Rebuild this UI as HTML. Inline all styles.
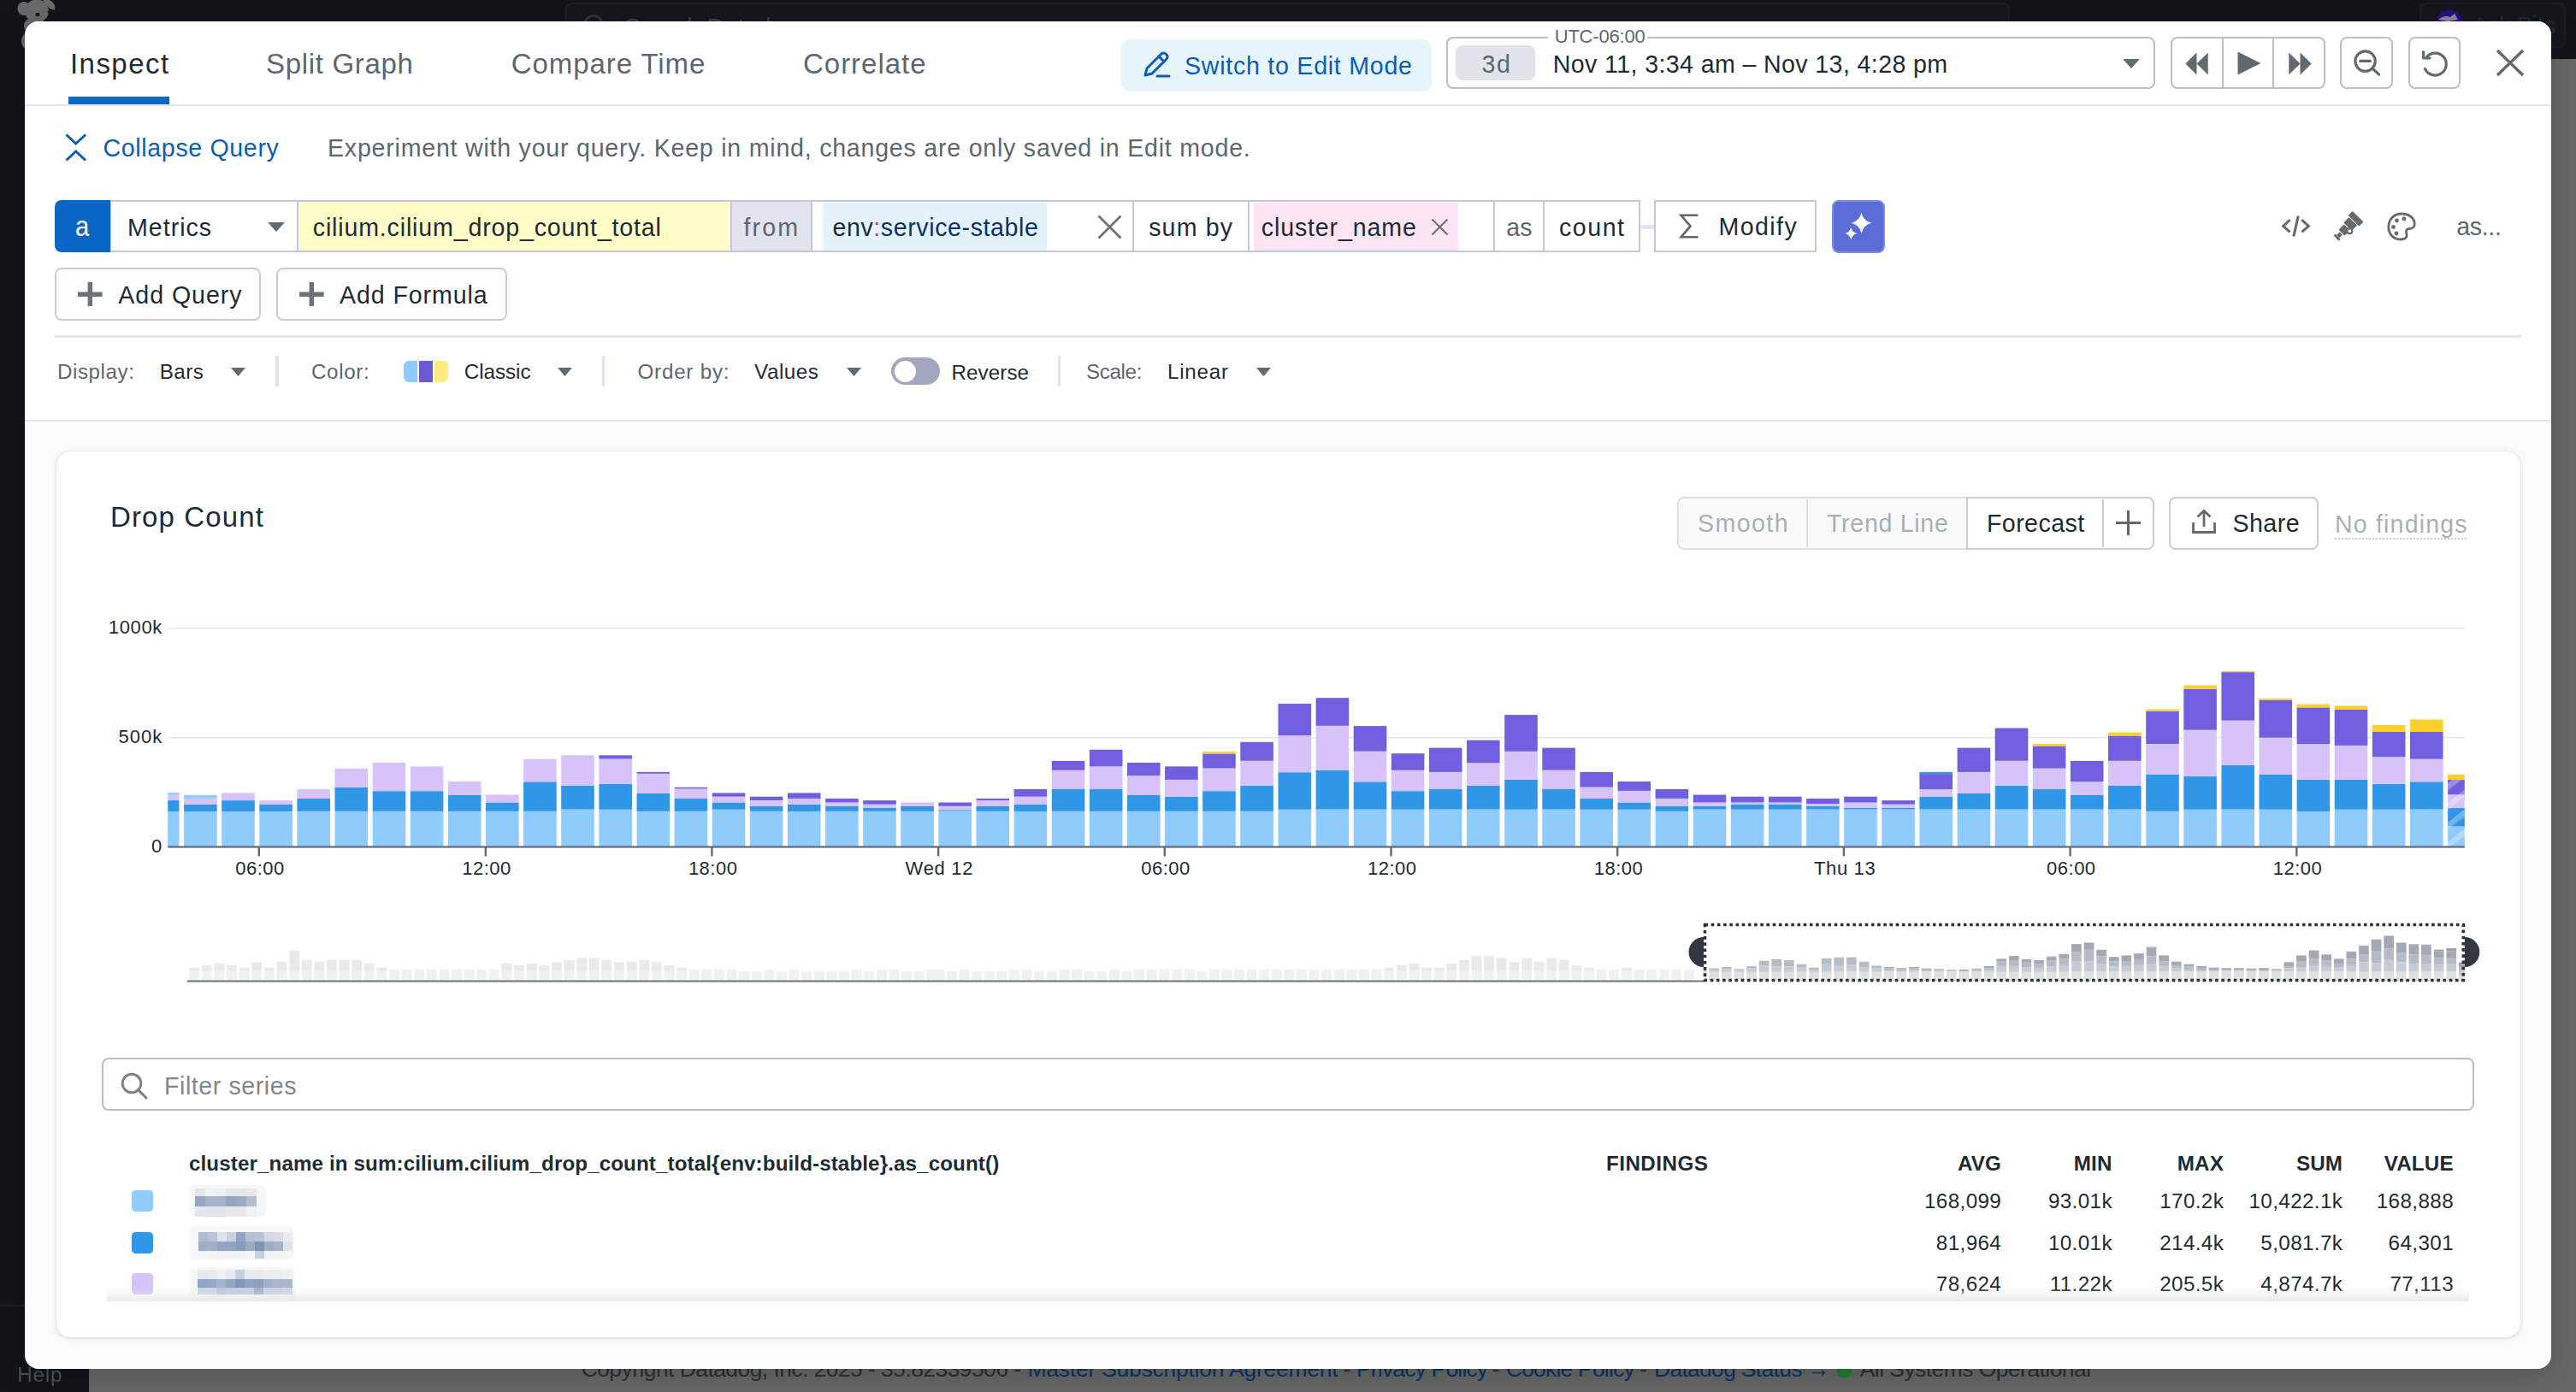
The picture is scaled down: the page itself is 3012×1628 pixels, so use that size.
<!DOCTYPE html>
<html lang="en"><head><meta charset="utf-8"><title>Drop Count - Inspect</title>
<style>
html,body{margin:0;padding:0;}
body{width:3012px;height:1628px;overflow:hidden;position:relative;background:#676868;font-family:"Liberation Sans", sans-serif;}
.a{position:absolute;box-sizing:border-box;}
.t{white-space:nowrap;}
</style></head>
<body>
<div class="a" style="left:0.0px;top:0.0px;width:3012.0px;height:68.5px;background:#111418;"></div>
<div class="a" style="left:0.0px;top:0.0px;width:104.0px;height:1628.0px;background:#111418;"></div>
<div class="a" style="left:661.0px;top:3.0px;width:1689.0px;height:60.0px;background:#15171c;border:2px solid #1c1f25;border-radius:8px;"></div>
<svg class="a" style="left:680.0px;top:14.0px;" width="30" height="30" viewBox="0 0 30 30"><circle cx="14" cy="15" r="10.5" fill="none" stroke="#33373e" stroke-width="2.6"/></svg>
<div class="a t" style="top:17.8px;font-size:28.6px;line-height:28.6px;color:#3d4148;letter-spacing:-0.297px;left:730.0px;">Search Datadog</div>
<div class="a" style="left:2829.0px;top:3.0px;width:171.0px;height:53.0px;background:#14171b;border:2px solid #1b1f24;border-radius:8px;"></div>
<svg class="a" style="left:2848.0px;top:11.0px;" width="32" height="32" viewBox="0 0 32 32"><circle cx="16" cy="16" r="15.5" fill="#2d0b80"/><path d="M3 12 Q10 6 17 9 L22 5 L26 12 L14 14 Z" fill="#8d8a99"/></svg>
<div class="a t" style="top:15.8px;font-size:28.6px;line-height:28.6px;color:#252930;letter-spacing:-0.723px;left:2890.0px;">Ask Bits</div>
<svg class="a" style="left:14.0px;top:0.0px;" width="60" height="64" viewBox="0 0 60 64"><g fill="#676a6a"><ellipse cx="14" cy="10" rx="7.5" ry="8"/><ellipse cx="29" cy="13" rx="14" ry="13.5"/><path d="M36 0 L44 0 Q52 4 50 12 L44 10 Z"/><ellipse cx="26" cy="30" rx="12" ry="10"/><ellipse cx="17" cy="48" rx="6" ry="9"/></g><ellipse cx="30" cy="17" rx="2.6" ry="2.2" fill="#15181b"/><ellipse cx="43.5" cy="14" rx="2" ry="1.8" fill="#15181b"/></svg>
<div class="a" style="left:0.0px;top:1525.6px;width:104.0px;height:2.0px;background:#1d2125;"></div>
<div class="a t" style="top:1595.5px;font-size:24.2px;line-height:24.2px;color:#4b5157;letter-spacing:0.813px;left:20.2px;">Help</div>
<div class="a t" style="top:1588.4px;font-size:26.4px;line-height:26.4px;color:#2b3035;letter-spacing:-0.527px;left:679.7px;">Copyright Datadog, Inc. 2025 - 35.82339506 -</div>
<div class="a t" style="top:1588.4px;font-size:26.4px;line-height:26.4px;color:#0d3466;letter-spacing:-0.175px;left:1201.4px;">Master Subscription Agreement</div>
<div class="a t" style="top:1588.4px;font-size:26.4px;line-height:26.4px;color:#2b3035;left:1570.5px;">-</div>
<div class="a t" style="top:1588.4px;font-size:26.4px;line-height:26.4px;color:#0d3466;letter-spacing:-0.783px;left:1586.0px;">Privacy Policy</div>
<div class="a t" style="top:1588.4px;font-size:26.4px;line-height:26.4px;color:#2b3035;left:1744.5px;">-</div>
<div class="a t" style="top:1588.4px;font-size:26.4px;line-height:26.4px;color:#0d3466;letter-spacing:-0.761px;left:1760.9px;">Cookie Policy</div>
<div class="a t" style="top:1588.4px;font-size:26.4px;line-height:26.4px;color:#2b3035;left:1917.0px;">-</div>
<div class="a t" style="top:1588.4px;font-size:26.4px;line-height:26.4px;color:#0d3466;letter-spacing:-0.660px;left:1934.0px;">Datadog Status →</div>
<div class="a" style="left:2146.5px;top:1593.0px;width:19.0px;height:19.0px;background:#2a7a2e;border-radius:9.5px;"></div>
<div class="a t" style="top:1588.4px;font-size:26.4px;line-height:26.4px;color:#2b3035;letter-spacing:-0.514px;left:2174.7px;">All Systems Operational</div>
<div class="a" style="left:29.0px;top:25.0px;width:2954.0px;height:1576.0px;background:#f9fafa;border-radius:16px;box-shadow:0 8px 36px rgba(0,0,0,.2);"></div>
<div class="a" style="left:29.0px;top:25.0px;width:2954.0px;height:468.0px;background:#ffffff;border-radius:16px 16px 0 0;border-bottom:2px solid #e3e5e8;"></div>
<div class="a" style="left:29.0px;top:122.2px;width:2954.0px;height:2.0px;background:#e3e5e8;"></div>
<div class="a t" style="top:57.5px;font-size:33px;line-height:33px;color:#1c2b34;letter-spacing:1.442px;left:82.0px;">Inspect</div>
<div class="a t" style="top:57.5px;font-size:33px;line-height:33px;color:#5c6670;letter-spacing:0.674px;left:311.0px;">Split Graph</div>
<div class="a t" style="top:57.5px;font-size:33px;line-height:33px;color:#5c6670;letter-spacing:0.924px;left:597.8px;">Compare Time</div>
<div class="a t" style="top:57.5px;font-size:33px;line-height:33px;color:#5c6670;letter-spacing:0.974px;left:939.0px;">Correlate</div>
<div class="a" style="left:80.0px;top:113.0px;width:118.0px;height:8.8px;background:#0969c3;"></div>
<div class="a" style="left:1311.0px;top:46.3px;width:362.5px;height:60.3px;background:#e6f4fb;border-radius:10px;"></div>
<svg class="a" style="left:1336.0px;top:58.0px;" width="36" height="36" viewBox="0 0 36 36"><g fill="none" stroke="#0b5cb5" stroke-width="3" stroke-linejoin="round" stroke-linecap="round"><path d="M3 30 L5 22 L22 5 a3.5 3.5 0 0 1 5 0 l1 1 a3.5 3.5 0 0 1 0 5 L11 28 Z"/><path d="M19 8 l6 6"/><path d="M17 31 H31"/></g></svg>
<div class="a t" style="top:63.4px;font-size:28.6px;line-height:28.6px;color:#0b5cb5;letter-spacing:0.737px;left:1385.0px;">Switch to Edit Mode</div>
<div class="a" style="left:1691.0px;top:42.6px;width:829.3px;height:61.4px;background:#fff;border:2px solid #b9bdd0;border-radius:8px;"></div>
<div class="a" style="left:1810.0px;top:40.0px;width:116.0px;height:8.0px;background:#fff;"></div>
<div class="a t" style="top:31.6px;font-size:22px;line-height:22px;color:#5c6670;letter-spacing:-0.200px;left:1817.7px;">UTC-06:00</div>
<div class="a" style="left:1702.0px;top:52.8px;width:93.0px;height:41.6px;background:#e1e3ea;border-radius:8px;"></div>
<div class="a t" style="top:61.0px;font-size:28.6px;line-height:28.6px;color:#5c6670;letter-spacing:1.644px;left:1732.4px;">3d</div>
<div class="a t" style="top:61.0px;font-size:28.6px;line-height:28.6px;color:#1c2b34;letter-spacing:0.376px;left:1815.8px;">Nov 11, 3:34 am – Nov 13, 4:28 pm</div>
<svg class="a" style="left:2482.4px;top:69.1px;" width="20" height="11" viewBox="0 0 20 11"><path d="M0 0H20L10.0 11Z" fill="#5f6b73"/></svg>
<div class="a" style="left:2538.0px;top:42.6px;width:180.5px;height:61.4px;background:#fff;border:2px solid #b9bdd0;border-radius:8px;"></div>
<div class="a" style="left:2598.0px;top:44.5px;width:2.0px;height:58.0px;background:#b9bdd0;"></div>
<div class="a" style="left:2656.5px;top:44.5px;width:2.0px;height:58.0px;background:#b9bdd0;"></div>
<svg class="a" style="left:2555.0px;top:60.5px;" width="28" height="27" viewBox="0 0 28 27"><path d="M13.5 0.5V26.5L0.3 13.5Z M26.7 0.5V26.5L13.5 13.5Z" fill="#626a71"/></svg>
<svg class="a" style="left:2616.0px;top:60.0px;" width="28" height="28" viewBox="0 0 28 28"><path d="M0.5 0.5V27.5L27.5 14Z" fill="#626a71"/></svg>
<svg class="a" style="left:2675.5px;top:60.5px;" width="28" height="27" viewBox="0 0 28 27"><path d="M0.3 0.5V26.5L13.5 13.5Z M13.5 0.5V26.5L26.7 13.5Z" fill="#626a71"/></svg>
<div class="a" style="left:2736.4px;top:42.6px;width:61.2px;height:61.4px;background:#fff;border:2px solid #b9bdd0;border-radius:8px;"></div>
<svg class="a" style="left:2750.0px;top:56.0px;" width="36" height="36" viewBox="0 0 36 36"><g fill="none" stroke="#626a71" stroke-width="3.2" stroke-linecap="round"><circle cx="15.6" cy="15.6" r="11.7"/><path d="M24 24 L31.6 31.2"/><path d="M9.8 15.4 H21.4"/></g></svg>
<div class="a" style="left:2816.3px;top:42.6px;width:60.6px;height:61.4px;background:#fff;border:2px solid #b9bdd0;border-radius:8px;"></div>
<svg class="a" style="left:2828.0px;top:56.0px;" width="38" height="38" viewBox="0 0 38 38"><g fill="none" stroke="#626a71" stroke-width="3.2" stroke-linecap="round" stroke-linejoin="round"><path d="M9.5 10.5 A13 13 0 1 1 7.5 24.5"/><path d="M5.5 4.5 V12 H13"/></g></svg>
<svg class="a" style="left:2918.0px;top:57.0px;" width="34" height="34" viewBox="0 0 34 34"><path d="M2 2L32 31M32 2L2 31" stroke="#626a71" stroke-width="3.4" fill="none"/></svg>
<svg class="a" style="left:75.0px;top:154.0px;" width="28" height="36" viewBox="0 0 28 36"><path d="M2.5 3.5L13.7 14L25 3.5M2.5 33.5L13.7 23L25 33.5" fill="none" stroke="#0b5cb5" stroke-width="3"/></svg>
<div class="a t" style="top:159.2px;font-size:28.6px;line-height:28.6px;color:#0b5cb5;letter-spacing:0.637px;left:120.5px;">Collapse Query</div>
<div class="a t" style="top:159.2px;font-size:28.6px;line-height:28.6px;color:#5c6670;letter-spacing:0.765px;left:383.0px;">Experiment with your query. Keep in mind, changes are only saved in Edit mode.</div>
<div class="a" style="left:128.3px;top:234.2px;width:220.7px;height:61.2px;background:#fff;border:2px solid #c3c6dc;"></div>
<div class="a" style="left:347.0px;top:234.2px;width:509.0px;height:61.2px;background:#fffcc8;border:2px solid #c3c6dc;"></div>
<div class="a" style="left:854.0px;top:234.2px;width:96.0px;height:61.2px;background:#e1e3ee;border:2px solid #c3c6dc;"></div>
<div class="a" style="left:948.0px;top:234.2px;width:378.0px;height:61.2px;background:#fff;border:2px solid #c3c6dc;"></div>
<div class="a" style="left:1324.0px;top:234.2px;width:137.0px;height:61.2px;background:#fff;border:2px solid #c3c6dc;"></div>
<div class="a" style="left:1459.0px;top:234.2px;width:289.0px;height:61.2px;background:#fff;border:2px solid #c3c6dc;"></div>
<div class="a" style="left:1746.0px;top:234.2px;width:59.7px;height:61.2px;background:#fff;border:2px solid #c3c6dc;"></div>
<div class="a" style="left:1803.7px;top:234.2px;width:114.6px;height:61.2px;background:#fff;border:2px solid #c3c6dc;"></div>
<div class="a" style="left:64.0px;top:234.2px;width:64.5px;height:61.2px;background:#0b66c6;border-radius:8px 0 0 8px;"></div>
<div class="a t" style="top:249.0px;font-size:32.5px;line-height:32.5px;color:#fff;left:88.3px;transform:scaleX(.9);transform-origin:left;">a</div>
<div class="a t" style="top:251.8px;font-size:28.6px;line-height:28.6px;color:#1c2b34;letter-spacing:1.023px;left:148.9px;">Metrics</div>
<svg class="a" style="left:313.3px;top:260.1px;" width="20" height="11" viewBox="0 0 20 11"><path d="M0 0H20L10.0 11Z" fill="#5f6b73"/></svg>
<div class="a t" style="top:251.8px;font-size:28.6px;line-height:28.6px;color:#1c2b34;letter-spacing:0.829px;left:365.8px;">cilium.cilium_drop_count_total</div>
<div class="a t" style="top:251.8px;font-size:28.6px;line-height:28.6px;color:#5c6670;letter-spacing:2.078px;left:869.6px;">from</div>
<div class="a" style="left:962.0px;top:237.0px;width:262.2px;height:55.5px;background:#e4f3fb;"></div>
<div class="a t" style="top:251.8px;font-size:28.6px;line-height:28.6px;color:#0b3070;letter-spacing:0.591px;left:973.4px;"><span style="color:#1c2b34">env</span><span style="color:#c42fb0">:</span>service-stable</div>
<svg class="a" style="left:1283.0px;top:250.5px;" width="29" height="29" viewBox="0 0 29 29"><path d="M1.5 1.5L27.5 27.5M27.5 1.5L1.5 27.5" stroke="#6b7278" stroke-width="2.8" fill="none"/></svg>
<div class="a t" style="top:251.8px;font-size:28.6px;line-height:28.6px;color:#1c2b34;letter-spacing:1.138px;left:1343.2px;">sum by</div>
<div class="a" style="left:1466.0px;top:237.0px;width:239.4px;height:55.5px;background:#fce4f3;"></div>
<div class="a t" style="top:251.8px;font-size:28.6px;line-height:28.6px;color:#1c2b34;letter-spacing:0.854px;left:1474.8px;">cluster_name</div>
<svg class="a" style="left:1673.0px;top:254.5px;" width="21" height="21" viewBox="0 0 21 21"><path d="M1.5 1.5L19.5 19.5M19.5 1.5L1.5 19.5" stroke="#6b7278" stroke-width="2.2" fill="none"/></svg>
<div class="a t" style="top:251.8px;font-size:28.6px;line-height:28.6px;color:#5c6670;letter-spacing:0.098px;left:1761.2px;">as</div>
<div class="a t" style="top:251.8px;font-size:28.6px;line-height:28.6px;color:#1c2b34;letter-spacing:1.528px;left:1823.0px;">count</div>
<div class="a" style="left:1918.0px;top:263.3px;width:17.0px;height:5.0px;background:#e1e3ee;"></div>
<div class="a" style="left:1934.2px;top:234.2px;width:189.5px;height:61.2px;background:#fff;border:2px solid #c3c6dc;"></div>
<svg class="a" style="left:1962.0px;top:248.0px;" width="26" height="33" viewBox="0 0 26 33"><path d="M23.5 3.7H3.5L14.5 16.5L3.5 29.3H23.5" fill="none" stroke="#5f666c" stroke-width="2.6" stroke-linejoin="miter"/></svg>
<div class="a t" style="top:251.4px;font-size:28.6px;line-height:28.6px;color:#1c2b34;letter-spacing:1.429px;left:2009.4px;">Modify</div>
<div class="a" style="left:2142.0px;top:234.0px;width:62.0px;height:61.5px;background:#5b6cd6;border:2px solid #7f8ce6;border-radius:8px;"></div>
<svg class="a" style="left:2142.0px;top:234.0px;" width="62" height="62" viewBox="0 0 62 62"><path d="M34.5 14.8 Q36.81 24.490000000000002 46.5 26.8 Q36.81 29.11 34.5 38.8 Q32.19 29.11 22.5 26.8 Q32.19 24.490000000000002 34.5 14.8Z M22.3 32 Q23.6475 37.6525 29.3 39 Q23.6475 40.3475 22.3 46 Q20.9525 40.3475 15.3 39 Q20.9525 37.6525 22.3 32Z" fill="#fff"/></svg>
<svg class="a" style="left:2664.0px;top:247.0px;" width="42" height="36" viewBox="0 0 42 36"><g fill="none" stroke="#646b70" stroke-width="3.4" transform="translate(21 17.5) scale(.9) translate(-21.3 -17.5)"><path d="M13 9.3L4.2 17.4L13 25.2"/><path d="M28.4 9.3L37.2 17.4L28.4 25.2"/><path d="M23.8 4.2L17.8 30.8"/></g></svg>
<svg class="a" style="left:2726.0px;top:245.0px;" width="40" height="40" viewBox="0 0 40 40"><g transform="translate(19.6 19.6) scale(.9) rotate(-45)" fill="#646b70"><rect x="10" y="-10" width="8" height="20" rx="1"/><rect x="-1" y="-7.5" width="10" height="15" rx="1"/><rect x="-12" y="-5.5" width="10" height="11" rx="1"/><rect x="-19" y="-2.5" width="6" height="5"/><rect x="-22" y="-5" width="3" height="10" rx="1"/></g><circle cx="21.3" cy="25.2" r="3" fill="#fff" stroke="#646b70" stroke-width="2.2"/></svg>
<svg class="a" style="left:2789.0px;top:246.0px;" width="38" height="38" viewBox="0 0 38 38"><path d="M19 4C10 4 3.8 10.6 3.8 19.5C3.8 28 10 34 18 34C22.5 34 25.5 32 25 28.5C24.6 25.5 23.5 23.5 26 22C28.5 20.6 33.8 22.5 34.2 16.5C34.6 9 27.5 4 19 4Z" fill="none" stroke="#646b70" stroke-width="2.8"/><g fill="#646b70"><circle cx="13.5" cy="12" r="2.4"/><circle cx="22" cy="10" r="2.4"/><circle cx="9.5" cy="19.5" r="2.4"/><circle cx="13" cy="27" r="2.4"/></g></svg>
<div class="a t" style="top:251.3px;font-size:28.6px;line-height:28.6px;color:#5c6670;letter-spacing:-0.368px;left:2872.3px;">as...</div>
<div class="a" style="left:63.6px;top:312.8px;width:241.6px;height:62.4px;background:#fff;border:2px solid #c8cbd9;border-radius:8px;"></div>
<div class="a" style="left:322.8px;top:312.8px;width:270.6px;height:62.4px;background:#fff;border:2px solid #c8cbd9;border-radius:8px;"></div>
<svg class="a" style="left:91.1px;top:329.5px;" width="28.6" height="28.6" viewBox="0 0 28.6 28.6"><path d="M14.3 0V28.6M0 14.3H28.6" stroke="#6a7378" stroke-width="5.4" fill="none"/></svg>
<svg class="a" style="left:350.1px;top:329.5px;" width="28.6" height="28.6" viewBox="0 0 28.6 28.6"><path d="M14.3 0V28.6M0 14.3H28.6" stroke="#6a7378" stroke-width="5.4" fill="none"/></svg>
<div class="a t" style="top:330.8px;font-size:28.6px;line-height:28.6px;color:#1c2b34;letter-spacing:0.946px;left:138.3px;">Add Query</div>
<div class="a t" style="top:330.8px;font-size:28.6px;line-height:28.6px;color:#1c2b34;letter-spacing:0.891px;left:397.0px;">Add Formula</div>
<div class="a" style="left:64.0px;top:392.0px;width:2883.5px;height:3.0px;background:#e5e7ea;"></div>
<div class="a t" style="top:423.1px;font-size:24.2px;line-height:24.2px;color:#5c6670;letter-spacing:0.559px;left:67.0px;">Display:</div>
<div class="a t" style="top:423.1px;font-size:24.2px;line-height:24.2px;color:#1c2b34;letter-spacing:0.491px;left:186.7px;">Bars</div>
<svg class="a" style="left:270.0px;top:430.2px;" width="17" height="10" viewBox="0 0 17 10"><path d="M0 0H17L8.5 10Z" fill="#5f6b73"/></svg>
<div class="a" style="left:322.0px;top:415.6px;width:3.6px;height:36.7px;background:#e0e1ea;"></div>
<div class="a t" style="top:423.1px;font-size:24.2px;line-height:24.2px;color:#5c6670;letter-spacing:0.680px;left:363.9px;">Color:</div>
<div class="a" style="left:472.0px;top:421.6px;width:16.0px;height:25.4px;background:#8fcbfc;border-radius:6px 0 0 6px;"></div>
<div class="a" style="left:490.0px;top:421.6px;width:15.5px;height:25.4px;background:#6c59d6;"></div>
<div class="a" style="left:507.5px;top:421.6px;width:16.0px;height:25.4px;background:#fdeb80;border-radius:0 6px 6px 0;"></div>
<div class="a t" style="top:423.1px;font-size:24.2px;line-height:24.2px;color:#1c2b34;letter-spacing:-0.022px;left:542.7px;">Classic</div>
<svg class="a" style="left:651.9px;top:430.2px;" width="17" height="10" viewBox="0 0 17 10"><path d="M0 0H17L8.5 10Z" fill="#5f6b73"/></svg>
<div class="a" style="left:703.8px;top:415.6px;width:3.6px;height:36.7px;background:#e0e1ea;"></div>
<div class="a t" style="top:423.1px;font-size:24.2px;line-height:24.2px;color:#5c6670;letter-spacing:0.775px;left:745.5px;">Order by:</div>
<div class="a t" style="top:423.1px;font-size:24.2px;line-height:24.2px;color:#1c2b34;letter-spacing:0.555px;left:882.0px;">Values</div>
<svg class="a" style="left:989.8px;top:430.2px;" width="17" height="10" viewBox="0 0 17 10"><path d="M0 0H17L8.5 10Z" fill="#5f6b73"/></svg>
<div class="a" style="left:1042.0px;top:418.0px;width:56.6px;height:32.4px;background:#a2a6c1;border-radius:16.2px;"></div>
<div class="a" style="left:1045.5px;top:421.5px;width:25.4px;height:25.4px;background:#fff;border-radius:12.7px;"></div>
<div class="a t" style="top:423.9px;font-size:24.2px;line-height:24.2px;color:#1c2b34;letter-spacing:0.075px;left:1112.5px;">Reverse</div>
<div class="a" style="left:1236.8px;top:415.6px;width:3.6px;height:36.7px;background:#e0e1ea;"></div>
<div class="a t" style="top:423.1px;font-size:24.2px;line-height:24.2px;color:#5c6670;letter-spacing:-0.338px;left:1269.9px;">Scale:</div>
<div class="a t" style="top:423.1px;font-size:24.2px;line-height:24.2px;color:#1c2b34;letter-spacing:0.743px;left:1365.0px;">Linear</div>
<svg class="a" style="left:1469.0px;top:430.2px;" width="17" height="10" viewBox="0 0 17 10"><path d="M0 0H17L8.5 10Z" fill="#5f6b73"/></svg>
<div class="a" style="left:66.0px;top:528.0px;width:2880.5px;height:1036.0px;background:#fff;border-radius:16px;box-shadow:0 1px 5px rgba(30,40,50,.16),0 0 1px rgba(30,40,50,.2);"></div>
<div class="a t" style="top:587.7px;font-size:33px;line-height:33px;color:#1c2b34;letter-spacing:1.123px;left:129.0px;">Drop Count</div>
<div class="a" style="left:1960.6px;top:580.9px;width:558.6px;height:62.2px;background:#f8f9f9;border:2px solid #dcdee6;border-radius:8px;"></div>
<div class="a" style="left:2111.7px;top:583.7px;width:2.0px;height:56.6px;background:#dcdee6;"></div>
<div class="a" style="left:2299.0px;top:580.9px;width:220.2px;height:62.2px;background:#fff;border:2px solid #c9ccdb;border-radius:0 8px 8px 0;"></div>
<div class="a" style="left:2458.0px;top:583.7px;width:2.0px;height:56.6px;background:#c9ccdb;"></div>
<div class="a t" style="top:598.4px;font-size:28.6px;line-height:28.6px;color:#a9b0b5;letter-spacing:1.409px;left:1985.0px;">Smooth</div>
<div class="a t" style="top:598.4px;font-size:28.6px;line-height:28.6px;color:#a9b0b5;letter-spacing:0.686px;left:2136.0px;">Trend Line</div>
<div class="a t" style="top:598.4px;font-size:28.6px;line-height:28.6px;color:#1c2b34;letter-spacing:0.408px;left:2323.0px;">Forecast</div>
<svg class="a" style="left:2473.8px;top:597.0px;" width="29.0" height="29.0" viewBox="0 0 29.0 29.0"><path d="M14.5 0V29.0M0 14.5H29.0" stroke="#5f666c" stroke-width="3" fill="none"/></svg>
<div class="a" style="left:2536.2px;top:580.9px;width:175.2px;height:62.2px;background:#fff;border:2px solid #c9ccdb;border-radius:8px;"></div>
<svg class="a" style="left:2561.0px;top:594.0px;" width="32" height="32" viewBox="0 0 32 32"><g fill="none" stroke="#626a71" stroke-width="2.8"><path d="M3.5 17V28.5H28.5V17"/><path d="M16 22V3.5"/><path d="M8.5 10.5L16 3.2L23.5 10.5"/></g></svg>
<div class="a t" style="top:598.4px;font-size:28.6px;line-height:28.6px;color:#1c2b34;letter-spacing:0.438px;left:2610.5px;">Share</div>
<div class="a t" style="top:599.4px;font-size:28.6px;line-height:28.6px;color:#a9b0b5;letter-spacing:1.158px;left:2730.0px;">No findings</div>
<div class="a" style="left:2730.0px;top:629.4px;width:153.5px;height:0.0px;border-top:2.5px dotted #c4c9cd;"></div>
<div class="a" style="left:118.8px;top:1236.9px;width:2774.6px;height:62.2px;background:#fff;border:2px solid #b9bdd0;border-radius:8px;"></div>
<svg class="a" style="left:140.0px;top:1253.0px;" width="34" height="34" viewBox="0 0 34 34"><g fill="none" stroke="#7a8288" stroke-width="3"><circle cx="14" cy="14" r="10.8"/><path d="M22 22L31 31" stroke-linecap="round"/></g></svg>
<div class="a t" style="top:1256.0px;font-size:28.6px;line-height:28.6px;color:#7f878d;letter-spacing:0.564px;left:192.0px;">Filter series</div>
<svg class="a" style="left:0.0px;top:0.0px;pointer-events:none;" width="3012" height="1628" viewBox="0 0 3012 1628"><rect x="196.2" y="734.2" width="2685.6000000000004" height="1.6" fill="#e6e7e9"/><rect x="196.2" y="861.9" width="2685.6000000000004" height="1.6" fill="#e6e7e9"/><defs><pattern id="hatch" width="18" height="18" patternUnits="userSpaceOnUse" patternTransform="rotate(-38)"><rect width="18" height="6.5" fill="#fff" fill-opacity=".3"/></pattern><clipPath id="plot"><rect x="196.2" y="700" width="2685.6000000000004" height="300"/></clipPath></defs><g clip-path="url(#plot)"><rect x="170.9" y="948.8" width="38.6" height="41.6" fill="#8fcbfc"/><rect x="170.9" y="936.1" width="38.6" height="12.8" fill="#2f96e8"/><rect x="170.9" y="929.8" width="38.6" height="6.2" fill="#d8c2fa"/><rect x="170.9" y="927.1" width="38.6" height="2.7" fill="#8fcbfc"/><rect x="215.1" y="948.8" width="38.6" height="41.6" fill="#8fcbfc"/><rect x="215.1" y="940.7" width="38.6" height="8.2" fill="#2f96e8"/><rect x="215.1" y="933.9" width="38.6" height="6.8" fill="#d8c2fa"/><rect x="215.1" y="929.8" width="38.6" height="4.1" fill="#8fcbfc"/><rect x="259.2" y="948.8" width="38.6" height="41.6" fill="#8fcbfc"/><rect x="259.2" y="936.1" width="38.6" height="12.8" fill="#2f96e8"/><rect x="259.2" y="927.4" width="38.6" height="8.7" fill="#d8c2fa"/><rect x="303.3" y="948.8" width="38.6" height="41.6" fill="#8fcbfc"/><rect x="303.3" y="940.7" width="38.6" height="8.2" fill="#2f96e8"/><rect x="303.3" y="936.1" width="38.6" height="4.6" fill="#d8c2fa"/><rect x="347.4" y="948.8" width="38.6" height="41.6" fill="#8fcbfc"/><rect x="347.4" y="933.9" width="38.6" height="14.9" fill="#2f96e8"/><rect x="347.4" y="923.0" width="38.6" height="10.9" fill="#d8c2fa"/><rect x="391.5" y="948.8" width="38.6" height="41.6" fill="#8fcbfc"/><rect x="391.5" y="920.8" width="38.6" height="28.0" fill="#2f96e8"/><rect x="391.5" y="898.8" width="38.6" height="22.0" fill="#d8c2fa"/><rect x="435.7" y="948.8" width="38.6" height="41.6" fill="#8fcbfc"/><rect x="435.7" y="925.2" width="38.6" height="23.6" fill="#2f96e8"/><rect x="435.7" y="892.0" width="38.6" height="33.2" fill="#d8c2fa"/><rect x="479.8" y="948.8" width="38.6" height="41.6" fill="#8fcbfc"/><rect x="479.8" y="925.2" width="38.6" height="23.6" fill="#2f96e8"/><rect x="479.8" y="896.4" width="38.6" height="28.8" fill="#d8c2fa"/><rect x="523.9" y="948.8" width="38.6" height="41.6" fill="#8fcbfc"/><rect x="523.9" y="929.8" width="38.6" height="19.0" fill="#2f96e8"/><rect x="523.9" y="914.0" width="38.6" height="15.8" fill="#d8c2fa"/><rect x="568.0" y="948.8" width="38.6" height="41.6" fill="#8fcbfc"/><rect x="568.0" y="938.5" width="38.6" height="10.3" fill="#2f96e8"/><rect x="568.0" y="929.5" width="38.6" height="9.0" fill="#d8c2fa"/><rect x="612.1" y="948.8" width="38.6" height="41.6" fill="#8fcbfc"/><rect x="612.1" y="914.3" width="38.6" height="34.5" fill="#2f96e8"/><rect x="612.1" y="887.7" width="38.6" height="26.6" fill="#d8c2fa"/><rect x="656.2" y="946.6" width="38.6" height="43.8" fill="#8fcbfc"/><rect x="656.2" y="918.9" width="38.6" height="27.7" fill="#2f96e8"/><rect x="656.2" y="883.3" width="38.6" height="35.6" fill="#d8c2fa"/><rect x="700.4" y="946.6" width="38.6" height="43.8" fill="#8fcbfc"/><rect x="700.4" y="916.8" width="38.6" height="29.9" fill="#2f96e8"/><rect x="700.4" y="887.7" width="38.6" height="29.1" fill="#d8c2fa"/><rect x="700.4" y="883.3" width="38.6" height="4.3" fill="#7060e0"/><rect x="744.5" y="948.8" width="38.6" height="41.6" fill="#8fcbfc"/><rect x="744.5" y="927.6" width="38.6" height="21.2" fill="#2f96e8"/><rect x="744.5" y="904.8" width="38.6" height="22.8" fill="#d8c2fa"/><rect x="744.5" y="902.9" width="38.6" height="1.9" fill="#7060e0"/><rect x="788.6" y="948.8" width="38.6" height="41.6" fill="#8fcbfc"/><rect x="788.6" y="933.9" width="38.6" height="14.9" fill="#2f96e8"/><rect x="788.6" y="922.5" width="38.6" height="11.4" fill="#d8c2fa"/><rect x="788.6" y="920.8" width="38.6" height="1.6" fill="#7060e0"/><rect x="832.7" y="946.6" width="38.6" height="43.8" fill="#8fcbfc"/><rect x="832.7" y="938.5" width="38.6" height="8.2" fill="#2f96e8"/><rect x="832.7" y="931.7" width="38.6" height="6.8" fill="#d8c2fa"/><rect x="832.7" y="927.4" width="38.6" height="4.3" fill="#7060e0"/><rect x="876.8" y="948.8" width="38.6" height="41.6" fill="#8fcbfc"/><rect x="876.8" y="942.8" width="38.6" height="6.0" fill="#2f96e8"/><rect x="876.8" y="936.1" width="38.6" height="6.8" fill="#d8c2fa"/><rect x="876.8" y="931.7" width="38.6" height="4.3" fill="#7060e0"/><rect x="920.9" y="948.8" width="38.6" height="41.6" fill="#8fcbfc"/><rect x="920.9" y="940.7" width="38.6" height="8.2" fill="#2f96e8"/><rect x="920.9" y="933.9" width="38.6" height="6.8" fill="#d8c2fa"/><rect x="920.9" y="927.4" width="38.6" height="6.5" fill="#7060e0"/><rect x="965.1" y="948.8" width="38.6" height="41.6" fill="#8fcbfc"/><rect x="965.1" y="942.8" width="38.6" height="6.0" fill="#2f96e8"/><rect x="965.1" y="938.5" width="38.6" height="4.3" fill="#d8c2fa"/><rect x="965.1" y="933.9" width="38.6" height="4.6" fill="#7060e0"/><rect x="1009.2" y="948.8" width="38.6" height="41.6" fill="#8fcbfc"/><rect x="1009.2" y="945.0" width="38.6" height="3.8" fill="#2f96e8"/><rect x="1009.2" y="940.7" width="38.6" height="4.3" fill="#d8c2fa"/><rect x="1009.2" y="936.1" width="38.6" height="4.6" fill="#7060e0"/><rect x="1053.3" y="948.8" width="38.6" height="41.6" fill="#8fcbfc"/><rect x="1053.3" y="942.8" width="38.6" height="6.0" fill="#2f96e8"/><rect x="1053.3" y="938.5" width="38.6" height="4.3" fill="#d8c2fa"/><rect x="1097.4" y="948.3" width="38.6" height="42.1" fill="#8fcbfc"/><rect x="1097.4" y="947.2" width="38.6" height="1.1" fill="#2f96e8"/><rect x="1097.4" y="942.8" width="38.6" height="4.3" fill="#d8c2fa"/><rect x="1097.4" y="938.5" width="38.6" height="4.3" fill="#7060e0"/><rect x="1141.5" y="948.8" width="38.6" height="41.6" fill="#8fcbfc"/><rect x="1141.5" y="942.8" width="38.6" height="6.0" fill="#2f96e8"/><rect x="1141.5" y="936.1" width="38.6" height="6.8" fill="#d8c2fa"/><rect x="1141.5" y="933.9" width="38.6" height="2.2" fill="#7060e0"/><rect x="1185.6" y="948.8" width="38.6" height="41.6" fill="#8fcbfc"/><rect x="1185.6" y="940.7" width="38.6" height="8.2" fill="#2f96e8"/><rect x="1185.6" y="931.7" width="38.6" height="9.0" fill="#d8c2fa"/><rect x="1185.6" y="923.0" width="38.6" height="8.7" fill="#7060e0"/><rect x="1229.8" y="948.8" width="38.6" height="41.6" fill="#8fcbfc"/><rect x="1229.8" y="923.0" width="38.6" height="25.8" fill="#2f96e8"/><rect x="1229.8" y="900.7" width="38.6" height="22.3" fill="#d8c2fa"/><rect x="1229.8" y="889.9" width="38.6" height="10.9" fill="#7060e0"/><rect x="1273.9" y="948.8" width="38.6" height="41.6" fill="#8fcbfc"/><rect x="1273.9" y="923.0" width="38.6" height="25.8" fill="#2f96e8"/><rect x="1273.9" y="896.4" width="38.6" height="26.6" fill="#d8c2fa"/><rect x="1273.9" y="876.8" width="38.6" height="19.6" fill="#7060e0"/><rect x="1318.0" y="948.8" width="38.6" height="41.6" fill="#8fcbfc"/><rect x="1318.0" y="929.8" width="38.6" height="19.0" fill="#2f96e8"/><rect x="1318.0" y="907.2" width="38.6" height="22.6" fill="#d8c2fa"/><rect x="1318.0" y="892.0" width="38.6" height="15.2" fill="#7060e0"/><rect x="1362.1" y="948.8" width="38.6" height="41.6" fill="#8fcbfc"/><rect x="1362.1" y="931.7" width="38.6" height="17.1" fill="#2f96e8"/><rect x="1362.1" y="911.9" width="38.6" height="19.8" fill="#d8c2fa"/><rect x="1362.1" y="896.4" width="38.6" height="15.5" fill="#7060e0"/><rect x="1406.2" y="948.8" width="38.6" height="41.6" fill="#8fcbfc"/><rect x="1406.2" y="925.2" width="38.6" height="23.6" fill="#2f96e8"/><rect x="1406.2" y="898.6" width="38.6" height="26.6" fill="#d8c2fa"/><rect x="1406.2" y="881.4" width="38.6" height="17.1" fill="#7060e0"/><rect x="1406.2" y="879.0" width="38.6" height="2.4" fill="#fdcf2c"/><rect x="1450.3" y="948.8" width="38.6" height="41.6" fill="#8fcbfc"/><rect x="1450.3" y="918.9" width="38.6" height="29.9" fill="#2f96e8"/><rect x="1450.3" y="889.9" width="38.6" height="29.1" fill="#d8c2fa"/><rect x="1450.3" y="867.8" width="38.6" height="22.0" fill="#7060e0"/><rect x="1494.5" y="946.6" width="38.6" height="43.8" fill="#8fcbfc"/><rect x="1494.5" y="903.2" width="38.6" height="43.5" fill="#2f96e8"/><rect x="1494.5" y="860.0" width="38.6" height="43.2" fill="#d8c2fa"/><rect x="1494.5" y="823.0" width="38.6" height="37.0" fill="#7060e0"/><rect x="1538.6" y="946.6" width="38.6" height="43.8" fill="#8fcbfc"/><rect x="1538.6" y="900.7" width="38.6" height="45.9" fill="#2f96e8"/><rect x="1538.6" y="848.8" width="38.6" height="51.9" fill="#d8c2fa"/><rect x="1538.6" y="816.2" width="38.6" height="32.6" fill="#7060e0"/><rect x="1582.7" y="946.6" width="38.6" height="43.8" fill="#8fcbfc"/><rect x="1582.7" y="914.3" width="38.6" height="32.3" fill="#2f96e8"/><rect x="1582.7" y="878.7" width="38.6" height="35.6" fill="#d8c2fa"/><rect x="1582.7" y="849.1" width="38.6" height="29.6" fill="#7060e0"/><rect x="1626.8" y="946.6" width="38.6" height="43.8" fill="#8fcbfc"/><rect x="1626.8" y="925.2" width="38.6" height="21.5" fill="#2f96e8"/><rect x="1626.8" y="900.7" width="38.6" height="24.5" fill="#d8c2fa"/><rect x="1626.8" y="881.2" width="38.6" height="19.6" fill="#7060e0"/><rect x="1670.9" y="946.6" width="38.6" height="43.8" fill="#8fcbfc"/><rect x="1670.9" y="923.0" width="38.6" height="23.6" fill="#2f96e8"/><rect x="1670.9" y="902.9" width="38.6" height="20.1" fill="#d8c2fa"/><rect x="1670.9" y="874.6" width="38.6" height="28.3" fill="#7060e0"/><rect x="1715.0" y="946.6" width="38.6" height="43.8" fill="#8fcbfc"/><rect x="1715.0" y="918.9" width="38.6" height="27.7" fill="#2f96e8"/><rect x="1715.0" y="892.0" width="38.6" height="26.9" fill="#d8c2fa"/><rect x="1715.0" y="865.7" width="38.6" height="26.4" fill="#7060e0"/><rect x="1759.2" y="946.6" width="38.6" height="43.8" fill="#8fcbfc"/><rect x="1759.2" y="911.9" width="38.6" height="34.8" fill="#2f96e8"/><rect x="1759.2" y="878.7" width="38.6" height="33.2" fill="#d8c2fa"/><rect x="1759.2" y="836.1" width="38.6" height="42.7" fill="#7060e0"/><rect x="1803.3" y="946.6" width="38.6" height="43.8" fill="#8fcbfc"/><rect x="1803.3" y="923.0" width="38.6" height="23.6" fill="#2f96e8"/><rect x="1803.3" y="900.7" width="38.6" height="22.3" fill="#d8c2fa"/><rect x="1803.3" y="874.6" width="38.6" height="26.1" fill="#7060e0"/><rect x="1847.4" y="946.6" width="38.6" height="43.8" fill="#8fcbfc"/><rect x="1847.4" y="933.9" width="38.6" height="12.8" fill="#2f96e8"/><rect x="1847.4" y="920.6" width="38.6" height="13.3" fill="#d8c2fa"/><rect x="1847.4" y="902.9" width="38.6" height="17.7" fill="#7060e0"/><rect x="1891.5" y="946.6" width="38.6" height="43.8" fill="#8fcbfc"/><rect x="1891.5" y="938.5" width="38.6" height="8.2" fill="#2f96e8"/><rect x="1891.5" y="924.9" width="38.6" height="13.6" fill="#d8c2fa"/><rect x="1891.5" y="914.0" width="38.6" height="10.9" fill="#7060e0"/><rect x="1935.6" y="948.8" width="38.6" height="41.6" fill="#8fcbfc"/><rect x="1935.6" y="942.8" width="38.6" height="6.0" fill="#2f96e8"/><rect x="1935.6" y="933.9" width="38.6" height="9.0" fill="#d8c2fa"/><rect x="1935.6" y="923.0" width="38.6" height="10.9" fill="#7060e0"/><rect x="1979.7" y="946.6" width="38.6" height="43.8" fill="#8fcbfc"/><rect x="1979.7" y="942.8" width="38.6" height="3.8" fill="#2f96e8"/><rect x="1979.7" y="938.5" width="38.6" height="4.3" fill="#d8c2fa"/><rect x="1979.7" y="929.5" width="38.6" height="9.0" fill="#7060e0"/><rect x="2023.9" y="946.6" width="38.6" height="43.8" fill="#8fcbfc"/><rect x="2023.9" y="940.7" width="38.6" height="6.0" fill="#2f96e8"/><rect x="2023.9" y="938.5" width="38.6" height="2.2" fill="#d8c2fa"/><rect x="2023.9" y="931.7" width="38.6" height="6.8" fill="#7060e0"/><rect x="2068.0" y="946.6" width="38.6" height="43.8" fill="#8fcbfc"/><rect x="2068.0" y="940.7" width="38.6" height="6.0" fill="#2f96e8"/><rect x="2068.0" y="938.5" width="38.6" height="2.2" fill="#d8c2fa"/><rect x="2068.0" y="931.7" width="38.6" height="6.8" fill="#7060e0"/><rect x="2112.1" y="946.6" width="38.6" height="43.8" fill="#8fcbfc"/><rect x="2112.1" y="942.8" width="38.6" height="3.8" fill="#2f96e8"/><rect x="2112.1" y="940.1" width="38.6" height="2.7" fill="#d8c2fa"/><rect x="2112.1" y="933.9" width="38.6" height="6.2" fill="#7060e0"/><rect x="2156.2" y="946.6" width="38.6" height="43.8" fill="#8fcbfc"/><rect x="2156.2" y="945.0" width="38.6" height="1.6" fill="#2f96e8"/><rect x="2156.2" y="938.5" width="38.6" height="6.5" fill="#d8c2fa"/><rect x="2156.2" y="931.7" width="38.6" height="6.8" fill="#7060e0"/><rect x="2200.3" y="946.6" width="38.6" height="43.8" fill="#8fcbfc"/><rect x="2200.3" y="945.0" width="38.6" height="1.6" fill="#2f96e8"/><rect x="2200.3" y="940.7" width="38.6" height="4.3" fill="#d8c2fa"/><rect x="2200.3" y="936.1" width="38.6" height="4.6" fill="#7060e0"/><rect x="2244.4" y="946.6" width="38.6" height="43.8" fill="#8fcbfc"/><rect x="2244.4" y="931.7" width="38.6" height="14.9" fill="#2f96e8"/><rect x="2244.4" y="923.0" width="38.6" height="8.7" fill="#d8c2fa"/><rect x="2244.4" y="905.1" width="38.6" height="17.9" fill="#7060e0"/><rect x="2244.4" y="902.9" width="38.6" height="2.2" fill="#2f96e8"/><rect x="2288.6" y="946.6" width="38.6" height="43.8" fill="#8fcbfc"/><rect x="2288.6" y="927.6" width="38.6" height="19.0" fill="#2f96e8"/><rect x="2288.6" y="902.9" width="38.6" height="24.7" fill="#d8c2fa"/><rect x="2288.6" y="874.6" width="38.6" height="28.3" fill="#7060e0"/><rect x="2332.7" y="946.6" width="38.6" height="43.8" fill="#8fcbfc"/><rect x="2332.7" y="918.9" width="38.6" height="27.7" fill="#2f96e8"/><rect x="2332.7" y="889.9" width="38.6" height="29.1" fill="#d8c2fa"/><rect x="2332.7" y="851.5" width="38.6" height="38.3" fill="#7060e0"/><rect x="2376.8" y="946.6" width="38.6" height="43.8" fill="#8fcbfc"/><rect x="2376.8" y="923.0" width="38.6" height="23.6" fill="#2f96e8"/><rect x="2376.8" y="898.6" width="38.6" height="24.5" fill="#d8c2fa"/><rect x="2376.8" y="872.5" width="38.6" height="26.1" fill="#7060e0"/><rect x="2376.8" y="870.0" width="38.6" height="2.4" fill="#fdcf2c"/><rect x="2420.9" y="946.6" width="38.6" height="43.8" fill="#8fcbfc"/><rect x="2420.9" y="929.8" width="38.6" height="16.8" fill="#2f96e8"/><rect x="2420.9" y="914.0" width="38.6" height="15.8" fill="#d8c2fa"/><rect x="2420.9" y="889.9" width="38.6" height="24.2" fill="#7060e0"/><rect x="2465.0" y="946.6" width="38.6" height="43.8" fill="#8fcbfc"/><rect x="2465.0" y="918.9" width="38.6" height="27.7" fill="#2f96e8"/><rect x="2465.0" y="889.9" width="38.6" height="29.1" fill="#d8c2fa"/><rect x="2465.0" y="860.5" width="38.6" height="29.3" fill="#7060e0"/><rect x="2465.0" y="856.7" width="38.6" height="3.8" fill="#fdcf2c"/><rect x="2509.2" y="948.8" width="38.6" height="41.6" fill="#8fcbfc"/><rect x="2509.2" y="905.9" width="38.6" height="42.9" fill="#2f96e8"/><rect x="2509.2" y="870.0" width="38.6" height="35.9" fill="#d8c2fa"/><rect x="2509.2" y="831.7" width="38.6" height="38.3" fill="#7060e0"/><rect x="2509.2" y="829.5" width="38.6" height="2.2" fill="#fdcf2c"/><rect x="2553.3" y="946.6" width="38.6" height="43.8" fill="#8fcbfc"/><rect x="2553.3" y="908.1" width="38.6" height="38.6" fill="#2f96e8"/><rect x="2553.3" y="853.7" width="38.6" height="54.3" fill="#d8c2fa"/><rect x="2553.3" y="805.6" width="38.6" height="48.1" fill="#7060e0"/><rect x="2553.3" y="801.5" width="38.6" height="4.1" fill="#fdcf2c"/><rect x="2597.4" y="946.6" width="38.6" height="43.8" fill="#8fcbfc"/><rect x="2597.4" y="894.7" width="38.6" height="51.9" fill="#2f96e8"/><rect x="2597.4" y="842.6" width="38.6" height="52.2" fill="#d8c2fa"/><rect x="2597.4" y="786.1" width="38.6" height="56.5" fill="#7060e0"/><rect x="2597.4" y="785.0" width="38.6" height="1.1" fill="#fdcf2c"/><rect x="2641.5" y="946.6" width="38.6" height="43.8" fill="#8fcbfc"/><rect x="2641.5" y="905.9" width="38.6" height="40.8" fill="#2f96e8"/><rect x="2641.5" y="862.7" width="38.6" height="43.2" fill="#d8c2fa"/><rect x="2641.5" y="818.7" width="38.6" height="44.0" fill="#7060e0"/><rect x="2641.5" y="816.8" width="38.6" height="1.9" fill="#fdcf2c"/><rect x="2685.6" y="948.8" width="38.6" height="41.6" fill="#8fcbfc"/><rect x="2685.6" y="911.9" width="38.6" height="37.0" fill="#2f96e8"/><rect x="2685.6" y="870.0" width="38.6" height="41.8" fill="#d8c2fa"/><rect x="2685.6" y="827.4" width="38.6" height="42.7" fill="#7060e0"/><rect x="2685.6" y="823.6" width="38.6" height="3.8" fill="#fdcf2c"/><rect x="2729.7" y="946.6" width="38.6" height="43.8" fill="#8fcbfc"/><rect x="2729.7" y="911.9" width="38.6" height="34.8" fill="#2f96e8"/><rect x="2729.7" y="871.9" width="38.6" height="39.9" fill="#d8c2fa"/><rect x="2729.7" y="829.8" width="38.6" height="42.1" fill="#7060e0"/><rect x="2729.7" y="825.5" width="38.6" height="4.3" fill="#fdcf2c"/><rect x="2773.9" y="946.6" width="38.6" height="43.8" fill="#8fcbfc"/><rect x="2773.9" y="916.8" width="38.6" height="29.9" fill="#2f96e8"/><rect x="2773.9" y="885.2" width="38.6" height="31.5" fill="#d8c2fa"/><rect x="2773.9" y="855.9" width="38.6" height="29.3" fill="#7060e0"/><rect x="2773.9" y="848.0" width="38.6" height="7.9" fill="#fdcf2c"/><rect x="2818.0" y="946.6" width="38.6" height="43.8" fill="#8fcbfc"/><rect x="2818.0" y="914.3" width="38.6" height="32.3" fill="#2f96e8"/><rect x="2818.0" y="887.7" width="38.6" height="26.6" fill="#d8c2fa"/><rect x="2818.0" y="855.9" width="38.6" height="31.8" fill="#7060e0"/><rect x="2818.0" y="841.5" width="38.6" height="14.4" fill="#fdcf2c"/><rect x="2862.1" y="966.5" width="38.6" height="23.9" fill="#8fcbfc"/><rect x="2862.1" y="945.0" width="38.6" height="21.5" fill="#2f96e8"/><rect x="2862.1" y="929.3" width="38.6" height="15.8" fill="#d8c2fa"/><rect x="2862.1" y="911.9" width="38.6" height="17.4" fill="#7060e0"/><rect x="2862.1" y="905.9" width="38.6" height="6.0" fill="#fdcf2c"/><rect x="2862.1" y="911.9" width="38.6" height="78.5" fill="url(#hatch)"/></g><rect x="196.2" y="989.4" width="2685.6000000000004" height="2.2" fill="#5d6b7c"/><rect x="301.6" y="990.4" width="2.4" height="11" fill="#5d6b7c"/><rect x="566.6" y="990.4" width="2.4" height="11" fill="#5d6b7c"/><rect x="831.2" y="990.4" width="2.4" height="11" fill="#5d6b7c"/><rect x="1095.9" y="990.4" width="2.4" height="11" fill="#5d6b7c"/><rect x="1360.6" y="990.4" width="2.4" height="11" fill="#5d6b7c"/><rect x="1625.3" y="990.4" width="2.4" height="11" fill="#5d6b7c"/><rect x="1890.0" y="990.4" width="2.4" height="11" fill="#5d6b7c"/><rect x="2154.7" y="990.4" width="2.4" height="11" fill="#5d6b7c"/><rect x="2419.4" y="990.4" width="2.4" height="11" fill="#5d6b7c"/><rect x="2684.1" y="990.4" width="2.4" height="11" fill="#5d6b7c"/></svg>
<div class="a t" style="top:1004.9px;font-size:22px;line-height:22px;color:#1c2b34;letter-spacing:0.487px;left:275.3px;">06:00</div>
<div class="a t" style="top:1004.9px;font-size:22px;line-height:22px;color:#1c2b34;letter-spacing:0.487px;left:540.3px;">12:00</div>
<div class="a t" style="top:1004.9px;font-size:22px;line-height:22px;color:#1c2b34;letter-spacing:0.487px;left:804.9px;">18:00</div>
<div class="a t" style="top:1004.9px;font-size:22px;line-height:22px;color:#1c2b34;letter-spacing:0.677px;left:1058.6px;">Wed 12</div>
<div class="a t" style="top:1004.9px;font-size:22px;line-height:22px;color:#1c2b34;letter-spacing:0.487px;left:1334.3px;">06:00</div>
<div class="a t" style="top:1004.9px;font-size:22px;line-height:22px;color:#1c2b34;letter-spacing:0.487px;left:1599.0px;">12:00</div>
<div class="a t" style="top:1004.9px;font-size:22px;line-height:22px;color:#1c2b34;letter-spacing:0.487px;left:1863.7px;">18:00</div>
<div class="a t" style="top:1004.9px;font-size:22px;line-height:22px;color:#1c2b34;letter-spacing:0.667px;left:2120.9px;">Thu 13</div>
<div class="a t" style="top:1004.9px;font-size:22px;line-height:22px;color:#1c2b34;letter-spacing:0.487px;left:2393.1px;">06:00</div>
<div class="a t" style="top:1004.9px;font-size:22px;line-height:22px;color:#1c2b34;letter-spacing:0.487px;left:2657.8px;">12:00</div>
<div class="a t" style="top:723.2px;font-size:22px;line-height:22px;color:#1c2b34;letter-spacing:0.631px;right:2822.1px;">1000k</div>
<div class="a t" style="top:851.2px;font-size:22px;line-height:22px;color:#1c2b34;letter-spacing:1.020px;right:2821.7px;">500k</div>
<div class="a t" style="top:979.2px;font-size:22px;line-height:22px;color:#1c2b34;right:2822.7px;">0</div>
<svg class="a" style="left:0.0px;top:0.0px;pointer-events:none;" width="3012" height="1628" viewBox="0 0 3012 1628"><rect x="221.4" y="1131.6" width="11.7" height="15.7" fill="#eff1f2"/><rect x="221.4" y="1131.6" width="11.7" height="3.7" fill="#e8ebec"/><rect x="236.0" y="1129.1" width="11.7" height="18.2" fill="#eff1f2"/><rect x="236.0" y="1129.1" width="11.7" height="6.2" fill="#e8ebec"/><rect x="250.6" y="1127.0" width="11.7" height="20.3" fill="#eff1f2"/><rect x="250.6" y="1127.0" width="11.7" height="8.3" fill="#e8ebec"/><rect x="265.2" y="1129.1" width="11.7" height="18.2" fill="#eff1f2"/><rect x="265.2" y="1129.1" width="11.7" height="6.2" fill="#e8ebec"/><rect x="279.8" y="1131.6" width="11.7" height="15.7" fill="#eff1f2"/><rect x="279.8" y="1131.6" width="11.7" height="3.7" fill="#e8ebec"/><rect x="294.4" y="1124.9" width="11.7" height="22.4" fill="#eff1f2"/><rect x="294.4" y="1124.9" width="11.7" height="10.4" fill="#e8ebec"/><rect x="309.1" y="1131.6" width="11.7" height="15.7" fill="#eff1f2"/><rect x="309.1" y="1131.6" width="11.7" height="3.7" fill="#e8ebec"/><rect x="323.7" y="1124.9" width="11.7" height="22.4" fill="#eff1f2"/><rect x="323.7" y="1124.9" width="11.7" height="10.4" fill="#e8ebec"/><rect x="338.3" y="1111.7" width="11.7" height="35.6" fill="#eff1f2"/><rect x="338.3" y="1111.7" width="11.7" height="23.6" fill="#e8ebec"/><rect x="352.9" y="1122.8" width="11.7" height="24.5" fill="#eff1f2"/><rect x="352.9" y="1122.8" width="11.7" height="12.5" fill="#e8ebec"/><rect x="367.5" y="1124.9" width="11.7" height="22.4" fill="#eff1f2"/><rect x="367.5" y="1124.9" width="11.7" height="10.4" fill="#e8ebec"/><rect x="382.1" y="1122.8" width="11.7" height="24.5" fill="#eff1f2"/><rect x="382.1" y="1122.8" width="11.7" height="12.5" fill="#e8ebec"/><rect x="396.7" y="1122.8" width="11.7" height="24.5" fill="#eff1f2"/><rect x="396.7" y="1122.8" width="11.7" height="12.5" fill="#e8ebec"/><rect x="411.3" y="1122.8" width="11.7" height="24.5" fill="#eff1f2"/><rect x="411.3" y="1122.8" width="11.7" height="12.5" fill="#e8ebec"/><rect x="425.9" y="1127.0" width="11.7" height="20.3" fill="#eff1f2"/><rect x="425.9" y="1127.0" width="11.7" height="8.3" fill="#e8ebec"/><rect x="440.5" y="1131.6" width="11.7" height="15.7" fill="#eff1f2"/><rect x="440.5" y="1131.6" width="11.7" height="3.7" fill="#e8ebec"/><rect x="455.2" y="1133.7" width="11.7" height="13.6" fill="#eff1f2"/><rect x="469.8" y="1133.7" width="11.7" height="13.6" fill="#eff1f2"/><rect x="484.4" y="1133.7" width="11.7" height="13.6" fill="#eff1f2"/><rect x="499.0" y="1133.7" width="11.7" height="13.6" fill="#eff1f2"/><rect x="513.6" y="1133.7" width="11.7" height="13.6" fill="#eff1f2"/><rect x="528.2" y="1133.7" width="11.7" height="13.6" fill="#eff1f2"/><rect x="542.8" y="1133.7" width="11.7" height="13.6" fill="#eff1f2"/><rect x="557.4" y="1133.7" width="11.7" height="13.6" fill="#eff1f2"/><rect x="572.0" y="1133.7" width="11.7" height="13.6" fill="#eff1f2"/><rect x="586.6" y="1127.0" width="11.7" height="20.3" fill="#eff1f2"/><rect x="586.6" y="1127.0" width="11.7" height="8.3" fill="#e8ebec"/><rect x="601.3" y="1129.1" width="11.7" height="18.2" fill="#eff1f2"/><rect x="601.3" y="1129.1" width="11.7" height="6.2" fill="#e8ebec"/><rect x="615.9" y="1127.0" width="11.7" height="20.3" fill="#eff1f2"/><rect x="615.9" y="1127.0" width="11.7" height="8.3" fill="#e8ebec"/><rect x="630.5" y="1129.1" width="11.7" height="18.2" fill="#eff1f2"/><rect x="630.5" y="1129.1" width="11.7" height="6.2" fill="#e8ebec"/><rect x="645.1" y="1124.9" width="11.7" height="22.4" fill="#eff1f2"/><rect x="645.1" y="1124.9" width="11.7" height="10.4" fill="#e8ebec"/><rect x="659.7" y="1122.8" width="11.7" height="24.5" fill="#eff1f2"/><rect x="659.7" y="1122.8" width="11.7" height="12.5" fill="#e8ebec"/><rect x="674.3" y="1120.4" width="11.7" height="26.9" fill="#eff1f2"/><rect x="674.3" y="1120.4" width="11.7" height="14.9" fill="#e8ebec"/><rect x="688.9" y="1120.4" width="11.7" height="26.9" fill="#eff1f2"/><rect x="688.9" y="1120.4" width="11.7" height="14.9" fill="#e8ebec"/><rect x="703.5" y="1122.8" width="11.7" height="24.5" fill="#eff1f2"/><rect x="703.5" y="1122.8" width="11.7" height="12.5" fill="#e8ebec"/><rect x="718.1" y="1124.9" width="11.7" height="22.4" fill="#eff1f2"/><rect x="718.1" y="1124.9" width="11.7" height="10.4" fill="#e8ebec"/><rect x="732.8" y="1124.9" width="11.7" height="22.4" fill="#eff1f2"/><rect x="732.8" y="1124.9" width="11.7" height="10.4" fill="#e8ebec"/><rect x="747.4" y="1122.8" width="11.7" height="24.5" fill="#eff1f2"/><rect x="747.4" y="1122.8" width="11.7" height="12.5" fill="#e8ebec"/><rect x="762.0" y="1124.9" width="11.7" height="22.4" fill="#eff1f2"/><rect x="762.0" y="1124.9" width="11.7" height="10.4" fill="#e8ebec"/><rect x="776.6" y="1129.1" width="11.7" height="18.2" fill="#eff1f2"/><rect x="776.6" y="1129.1" width="11.7" height="6.2" fill="#e8ebec"/><rect x="791.2" y="1131.6" width="11.7" height="15.7" fill="#eff1f2"/><rect x="791.2" y="1131.6" width="11.7" height="3.7" fill="#e8ebec"/><rect x="805.8" y="1133.7" width="11.7" height="13.6" fill="#eff1f2"/><rect x="820.4" y="1133.7" width="11.7" height="13.6" fill="#eff1f2"/><rect x="835.0" y="1133.7" width="11.7" height="13.6" fill="#eff1f2"/><rect x="849.6" y="1133.7" width="11.7" height="13.6" fill="#eff1f2"/><rect x="864.2" y="1135.8" width="11.7" height="11.5" fill="#eff1f2"/><rect x="878.8" y="1135.8" width="11.7" height="11.5" fill="#eff1f2"/><rect x="893.5" y="1133.7" width="11.7" height="13.6" fill="#eff1f2"/><rect x="908.1" y="1135.8" width="11.7" height="11.5" fill="#eff1f2"/><rect x="922.7" y="1133.7" width="11.7" height="13.6" fill="#eff1f2"/><rect x="937.3" y="1135.8" width="11.7" height="11.5" fill="#eff1f2"/><rect x="951.9" y="1135.8" width="11.7" height="11.5" fill="#eff1f2"/><rect x="966.5" y="1135.8" width="11.7" height="11.5" fill="#eff1f2"/><rect x="981.1" y="1135.8" width="11.7" height="11.5" fill="#eff1f2"/><rect x="995.7" y="1133.7" width="11.7" height="13.6" fill="#eff1f2"/><rect x="1010.3" y="1135.8" width="11.7" height="11.5" fill="#eff1f2"/><rect x="1025.0" y="1133.7" width="11.7" height="13.6" fill="#eff1f2"/><rect x="1039.6" y="1133.7" width="11.7" height="13.6" fill="#eff1f2"/><rect x="1054.2" y="1135.8" width="11.7" height="11.5" fill="#eff1f2"/><rect x="1068.8" y="1135.8" width="11.7" height="11.5" fill="#eff1f2"/><rect x="1083.4" y="1133.7" width="11.7" height="13.6" fill="#eff1f2"/><rect x="1092.5" y="1133.7" width="11.7" height="13.6" fill="#eff1f2"/><rect x="1107.1" y="1135.8" width="11.7" height="11.5" fill="#eff1f2"/><rect x="1121.7" y="1133.7" width="11.7" height="13.6" fill="#eff1f2"/><rect x="1136.3" y="1135.8" width="11.7" height="11.5" fill="#eff1f2"/><rect x="1150.9" y="1135.8" width="11.7" height="11.5" fill="#eff1f2"/><rect x="1165.5" y="1135.8" width="11.7" height="11.5" fill="#eff1f2"/><rect x="1180.1" y="1133.7" width="11.7" height="13.6" fill="#eff1f2"/><rect x="1194.7" y="1133.7" width="11.7" height="13.6" fill="#eff1f2"/><rect x="1209.3" y="1135.8" width="11.7" height="11.5" fill="#eff1f2"/><rect x="1224.0" y="1135.8" width="11.7" height="11.5" fill="#eff1f2"/><rect x="1238.6" y="1133.7" width="11.7" height="13.6" fill="#eff1f2"/><rect x="1253.2" y="1133.7" width="11.7" height="13.6" fill="#eff1f2"/><rect x="1267.8" y="1135.8" width="11.7" height="11.5" fill="#eff1f2"/><rect x="1282.4" y="1135.8" width="11.7" height="11.5" fill="#eff1f2"/><rect x="1297.0" y="1133.7" width="11.7" height="13.6" fill="#eff1f2"/><rect x="1311.6" y="1135.8" width="11.7" height="11.5" fill="#eff1f2"/><rect x="1326.2" y="1133.7" width="11.7" height="13.6" fill="#eff1f2"/><rect x="1340.8" y="1133.7" width="11.7" height="13.6" fill="#eff1f2"/><rect x="1355.5" y="1133.7" width="11.7" height="13.6" fill="#eff1f2"/><rect x="1370.1" y="1133.7" width="11.7" height="13.6" fill="#eff1f2"/><rect x="1384.7" y="1133.7" width="11.7" height="13.6" fill="#eff1f2"/><rect x="1399.3" y="1135.8" width="11.7" height="11.5" fill="#eff1f2"/><rect x="1413.9" y="1133.7" width="11.7" height="13.6" fill="#eff1f2"/><rect x="1428.5" y="1133.7" width="11.7" height="13.6" fill="#eff1f2"/><rect x="1443.1" y="1133.7" width="11.7" height="13.6" fill="#eff1f2"/><rect x="1457.7" y="1133.7" width="11.7" height="13.6" fill="#eff1f2"/><rect x="1472.3" y="1133.7" width="11.7" height="13.6" fill="#eff1f2"/><rect x="1487.0" y="1133.7" width="11.7" height="13.6" fill="#eff1f2"/><rect x="1501.6" y="1133.7" width="11.7" height="13.6" fill="#eff1f2"/><rect x="1516.2" y="1133.7" width="11.7" height="13.6" fill="#eff1f2"/><rect x="1530.8" y="1133.7" width="11.7" height="13.6" fill="#eff1f2"/><rect x="1545.4" y="1133.7" width="11.7" height="13.6" fill="#eff1f2"/><rect x="1560.0" y="1133.7" width="11.7" height="13.6" fill="#eff1f2"/><rect x="1574.6" y="1133.7" width="11.7" height="13.6" fill="#eff1f2"/><rect x="1589.2" y="1133.7" width="11.7" height="13.6" fill="#eff1f2"/><rect x="1603.8" y="1133.7" width="11.7" height="13.6" fill="#eff1f2"/><rect x="1618.4" y="1131.6" width="11.7" height="15.7" fill="#eff1f2"/><rect x="1618.4" y="1131.6" width="11.7" height="3.7" fill="#e8ebec"/><rect x="1633.1" y="1129.1" width="11.7" height="18.2" fill="#eff1f2"/><rect x="1633.1" y="1129.1" width="11.7" height="6.2" fill="#e8ebec"/><rect x="1647.7" y="1127.0" width="11.7" height="20.3" fill="#eff1f2"/><rect x="1647.7" y="1127.0" width="11.7" height="8.3" fill="#e8ebec"/><rect x="1662.3" y="1131.6" width="11.7" height="15.7" fill="#eff1f2"/><rect x="1662.3" y="1131.6" width="11.7" height="3.7" fill="#e8ebec"/><rect x="1676.9" y="1131.6" width="11.7" height="15.7" fill="#eff1f2"/><rect x="1676.9" y="1131.6" width="11.7" height="3.7" fill="#e8ebec"/><rect x="1691.5" y="1127.0" width="11.7" height="20.3" fill="#eff1f2"/><rect x="1691.5" y="1127.0" width="11.7" height="8.3" fill="#e8ebec"/><rect x="1706.1" y="1122.8" width="11.7" height="24.5" fill="#eff1f2"/><rect x="1706.1" y="1122.8" width="11.7" height="12.5" fill="#e8ebec"/><rect x="1720.7" y="1118.3" width="11.7" height="29.0" fill="#eff1f2"/><rect x="1720.7" y="1118.3" width="11.7" height="17.0" fill="#e8ebec"/><rect x="1735.3" y="1118.3" width="11.7" height="29.0" fill="#eff1f2"/><rect x="1735.3" y="1118.3" width="11.7" height="17.0" fill="#e8ebec"/><rect x="1749.9" y="1120.4" width="11.7" height="26.9" fill="#eff1f2"/><rect x="1749.9" y="1120.4" width="11.7" height="14.9" fill="#e8ebec"/><rect x="1764.6" y="1124.9" width="11.7" height="22.4" fill="#eff1f2"/><rect x="1764.6" y="1124.9" width="11.7" height="10.4" fill="#e8ebec"/><rect x="1779.2" y="1120.4" width="11.7" height="26.9" fill="#eff1f2"/><rect x="1779.2" y="1120.4" width="11.7" height="14.9" fill="#e8ebec"/><rect x="1793.8" y="1124.9" width="11.7" height="22.4" fill="#eff1f2"/><rect x="1793.8" y="1124.9" width="11.7" height="10.4" fill="#e8ebec"/><rect x="1808.4" y="1120.4" width="11.7" height="26.9" fill="#eff1f2"/><rect x="1808.4" y="1120.4" width="11.7" height="14.9" fill="#e8ebec"/><rect x="1823.0" y="1122.8" width="11.7" height="24.5" fill="#eff1f2"/><rect x="1823.0" y="1122.8" width="11.7" height="12.5" fill="#e8ebec"/><rect x="1837.6" y="1129.1" width="11.7" height="18.2" fill="#eff1f2"/><rect x="1837.6" y="1129.1" width="11.7" height="6.2" fill="#e8ebec"/><rect x="1852.2" y="1131.6" width="11.7" height="15.7" fill="#eff1f2"/><rect x="1852.2" y="1131.6" width="11.7" height="3.7" fill="#e8ebec"/><rect x="1866.8" y="1133.7" width="11.7" height="13.6" fill="#eff1f2"/><rect x="1881.4" y="1133.7" width="11.7" height="13.6" fill="#eff1f2"/><rect x="1896.1" y="1131.6" width="11.7" height="15.7" fill="#eff1f2"/><rect x="1896.1" y="1131.6" width="11.7" height="3.7" fill="#e8ebec"/><rect x="1910.7" y="1133.7" width="11.7" height="13.6" fill="#eff1f2"/><rect x="1925.3" y="1133.7" width="11.7" height="13.6" fill="#eff1f2"/><rect x="1939.9" y="1133.7" width="11.7" height="13.6" fill="#eff1f2"/><rect x="1954.5" y="1133.7" width="11.7" height="13.6" fill="#eff1f2"/><rect x="1969.1" y="1133.7" width="11.7" height="13.6" fill="#eff1f2"/><rect x="218.6" y="1146.5" width="1773.4" height="2" fill="#6a727b"/><clipPath id="msel"><rect x="1992.0" y="1080" width="889.8000000000002" height="70"/></clipPath><g clip-path="url(#msel)"><rect x="1983.7" y="1136.6" width="11.7" height="10.7" fill="#dde1e4"/><rect x="1983.7" y="1133.3" width="11.7" height="3.3" fill="#c6ccd3"/><rect x="1983.7" y="1131.7" width="11.7" height="1.6" fill="#b6bcc6"/><rect x="1983.7" y="1131.0" width="11.7" height="0.7" fill="#dde1e4"/><rect x="1998.3" y="1136.6" width="11.7" height="10.7" fill="#dde1e4"/><rect x="1998.3" y="1134.5" width="11.7" height="2.1" fill="#c6ccd3"/><rect x="1998.3" y="1132.7" width="11.7" height="1.8" fill="#b6bcc6"/><rect x="1998.3" y="1131.7" width="11.7" height="1.1" fill="#dde1e4"/><rect x="2012.9" y="1136.6" width="11.7" height="10.7" fill="#dde1e4"/><rect x="2012.9" y="1133.3" width="11.7" height="3.3" fill="#c6ccd3"/><rect x="2012.9" y="1131.0" width="11.7" height="2.2" fill="#b6bcc6"/><rect x="2027.6" y="1136.6" width="11.7" height="10.7" fill="#dde1e4"/><rect x="2027.6" y="1134.5" width="11.7" height="2.1" fill="#c6ccd3"/><rect x="2027.6" y="1133.3" width="11.7" height="1.2" fill="#b6bcc6"/><rect x="2042.2" y="1136.6" width="11.7" height="10.7" fill="#dde1e4"/><rect x="2042.2" y="1132.7" width="11.7" height="3.9" fill="#c6ccd3"/><rect x="2042.2" y="1129.9" width="11.7" height="2.8" fill="#b6bcc6"/><rect x="2056.8" y="1136.6" width="11.7" height="10.7" fill="#dde1e4"/><rect x="2056.8" y="1129.4" width="11.7" height="7.2" fill="#c6ccd3"/><rect x="2056.8" y="1123.7" width="11.7" height="5.7" fill="#b6bcc6"/><rect x="2071.4" y="1136.6" width="11.7" height="10.7" fill="#dde1e4"/><rect x="2071.4" y="1130.5" width="11.7" height="6.1" fill="#c6ccd3"/><rect x="2071.4" y="1121.9" width="11.7" height="8.6" fill="#b6bcc6"/><rect x="2086.0" y="1136.6" width="11.7" height="10.7" fill="#dde1e4"/><rect x="2086.0" y="1130.5" width="11.7" height="6.1" fill="#c6ccd3"/><rect x="2086.0" y="1123.0" width="11.7" height="7.4" fill="#b6bcc6"/><rect x="2100.6" y="1136.6" width="11.7" height="10.7" fill="#dde1e4"/><rect x="2100.6" y="1131.7" width="11.7" height="4.9" fill="#c6ccd3"/><rect x="2100.6" y="1127.6" width="11.7" height="4.1" fill="#b6bcc6"/><rect x="2115.2" y="1136.6" width="11.7" height="10.7" fill="#dde1e4"/><rect x="2115.2" y="1133.9" width="11.7" height="2.7" fill="#c6ccd3"/><rect x="2115.2" y="1131.6" width="11.7" height="2.3" fill="#b6bcc6"/><rect x="2129.8" y="1136.6" width="11.7" height="10.7" fill="#dde1e4"/><rect x="2129.8" y="1127.7" width="11.7" height="8.9" fill="#c6ccd3"/><rect x="2129.8" y="1120.8" width="11.7" height="6.9" fill="#b6bcc6"/><rect x="2144.4" y="1136.0" width="11.7" height="11.3" fill="#dde1e4"/><rect x="2144.4" y="1128.9" width="11.7" height="7.2" fill="#c6ccd3"/><rect x="2144.4" y="1119.7" width="11.7" height="9.2" fill="#b6bcc6"/><rect x="2159.1" y="1136.0" width="11.7" height="11.3" fill="#dde1e4"/><rect x="2159.1" y="1128.3" width="11.7" height="7.7" fill="#c6ccd3"/><rect x="2159.1" y="1120.8" width="11.7" height="7.5" fill="#b6bcc6"/><rect x="2159.1" y="1119.7" width="11.7" height="1.1" fill="#a3a8b4"/><rect x="2173.7" y="1136.6" width="11.7" height="10.7" fill="#dde1e4"/><rect x="2173.7" y="1131.1" width="11.7" height="5.5" fill="#c6ccd3"/><rect x="2173.7" y="1125.2" width="11.7" height="5.9" fill="#b6bcc6"/><rect x="2173.7" y="1124.7" width="11.7" height="0.5" fill="#a3a8b4"/><rect x="2188.3" y="1136.6" width="11.7" height="10.7" fill="#dde1e4"/><rect x="2188.3" y="1132.7" width="11.7" height="3.9" fill="#c6ccd3"/><rect x="2188.3" y="1129.8" width="11.7" height="2.9" fill="#b6bcc6"/><rect x="2188.3" y="1129.4" width="11.7" height="0.4" fill="#a3a8b4"/><rect x="2202.9" y="1136.0" width="11.7" height="11.3" fill="#dde1e4"/><rect x="2202.9" y="1133.9" width="11.7" height="2.1" fill="#c6ccd3"/><rect x="2202.9" y="1132.2" width="11.7" height="1.8" fill="#b6bcc6"/><rect x="2202.9" y="1131.0" width="11.7" height="1.1" fill="#a3a8b4"/><rect x="2217.5" y="1136.6" width="11.7" height="10.7" fill="#dde1e4"/><rect x="2217.5" y="1135.0" width="11.7" height="1.5" fill="#c6ccd3"/><rect x="2217.5" y="1133.3" width="11.7" height="1.8" fill="#b6bcc6"/><rect x="2217.5" y="1132.2" width="11.7" height="1.1" fill="#a3a8b4"/><rect x="2232.1" y="1136.6" width="11.7" height="10.7" fill="#dde1e4"/><rect x="2232.1" y="1134.5" width="11.7" height="2.1" fill="#c6ccd3"/><rect x="2232.1" y="1132.7" width="11.7" height="1.8" fill="#b6bcc6"/><rect x="2232.1" y="1131.0" width="11.7" height="1.7" fill="#a3a8b4"/><rect x="2246.7" y="1136.6" width="11.7" height="10.7" fill="#dde1e4"/><rect x="2246.7" y="1135.0" width="11.7" height="1.5" fill="#c6ccd3"/><rect x="2246.7" y="1133.9" width="11.7" height="1.1" fill="#b6bcc6"/><rect x="2246.7" y="1132.7" width="11.7" height="1.2" fill="#a3a8b4"/><rect x="2261.3" y="1136.6" width="11.7" height="10.7" fill="#dde1e4"/><rect x="2261.3" y="1135.6" width="11.7" height="1.0" fill="#c6ccd3"/><rect x="2261.3" y="1134.5" width="11.7" height="1.1" fill="#b6bcc6"/><rect x="2261.3" y="1133.3" width="11.7" height="1.2" fill="#a3a8b4"/><rect x="2275.9" y="1136.6" width="11.7" height="10.7" fill="#dde1e4"/><rect x="2275.9" y="1135.0" width="11.7" height="1.5" fill="#c6ccd3"/><rect x="2275.9" y="1133.9" width="11.7" height="1.1" fill="#b6bcc6"/><rect x="2290.5" y="1136.4" width="11.7" height="10.9" fill="#dde1e4"/><rect x="2290.5" y="1136.2" width="11.7" height="0.3" fill="#c6ccd3"/><rect x="2290.5" y="1135.0" width="11.7" height="1.1" fill="#b6bcc6"/><rect x="2290.5" y="1133.9" width="11.7" height="1.1" fill="#a3a8b4"/><rect x="2305.2" y="1136.6" width="11.7" height="10.7" fill="#dde1e4"/><rect x="2305.2" y="1135.0" width="11.7" height="1.5" fill="#c6ccd3"/><rect x="2305.2" y="1133.3" width="11.7" height="1.8" fill="#b6bcc6"/><rect x="2305.2" y="1132.7" width="11.7" height="0.6" fill="#a3a8b4"/><rect x="2319.8" y="1136.6" width="11.7" height="10.7" fill="#dde1e4"/><rect x="2319.8" y="1134.5" width="11.7" height="2.1" fill="#c6ccd3"/><rect x="2319.8" y="1132.2" width="11.7" height="2.3" fill="#b6bcc6"/><rect x="2319.8" y="1129.9" width="11.7" height="2.2" fill="#a3a8b4"/><rect x="2334.4" y="1136.6" width="11.7" height="10.7" fill="#dde1e4"/><rect x="2334.4" y="1129.9" width="11.7" height="6.7" fill="#c6ccd3"/><rect x="2334.4" y="1124.2" width="11.7" height="5.7" fill="#b6bcc6"/><rect x="2334.4" y="1121.4" width="11.7" height="2.8" fill="#a3a8b4"/><rect x="2349.0" y="1136.6" width="11.7" height="10.7" fill="#dde1e4"/><rect x="2349.0" y="1129.9" width="11.7" height="6.7" fill="#c6ccd3"/><rect x="2349.0" y="1123.0" width="11.7" height="6.9" fill="#b6bcc6"/><rect x="2349.0" y="1118.0" width="11.7" height="5.0" fill="#a3a8b4"/><rect x="2363.6" y="1136.6" width="11.7" height="10.7" fill="#dde1e4"/><rect x="2363.6" y="1131.7" width="11.7" height="4.9" fill="#c6ccd3"/><rect x="2363.6" y="1125.8" width="11.7" height="5.8" fill="#b6bcc6"/><rect x="2363.6" y="1121.9" width="11.7" height="3.9" fill="#a3a8b4"/><rect x="2378.2" y="1136.6" width="11.7" height="10.7" fill="#dde1e4"/><rect x="2378.2" y="1132.2" width="11.7" height="4.4" fill="#c6ccd3"/><rect x="2378.2" y="1127.0" width="11.7" height="5.1" fill="#b6bcc6"/><rect x="2378.2" y="1123.0" width="11.7" height="4.0" fill="#a3a8b4"/><rect x="2392.8" y="1136.6" width="11.7" height="10.7" fill="#dde1e4"/><rect x="2392.8" y="1130.5" width="11.7" height="6.1" fill="#c6ccd3"/><rect x="2392.8" y="1123.6" width="11.7" height="6.9" fill="#b6bcc6"/><rect x="2392.8" y="1119.2" width="11.7" height="4.4" fill="#a3a8b4"/><rect x="2392.8" y="1118.6" width="11.7" height="0.6" fill="#9a9fab"/><rect x="2407.4" y="1136.6" width="11.7" height="10.7" fill="#dde1e4"/><rect x="2407.4" y="1128.9" width="11.7" height="7.7" fill="#c6ccd3"/><rect x="2407.4" y="1121.4" width="11.7" height="7.5" fill="#b6bcc6"/><rect x="2407.4" y="1115.7" width="11.7" height="5.7" fill="#a3a8b4"/><rect x="2422.0" y="1136.0" width="11.7" height="11.3" fill="#dde1e4"/><rect x="2422.0" y="1124.8" width="11.7" height="11.2" fill="#c6ccd3"/><rect x="2422.0" y="1113.6" width="11.7" height="11.1" fill="#b6bcc6"/><rect x="2422.0" y="1104.1" width="11.7" height="9.5" fill="#a3a8b4"/><rect x="2436.7" y="1136.0" width="11.7" height="11.3" fill="#dde1e4"/><rect x="2436.7" y="1124.2" width="11.7" height="11.8" fill="#c6ccd3"/><rect x="2436.7" y="1110.8" width="11.7" height="13.4" fill="#b6bcc6"/><rect x="2436.7" y="1102.4" width="11.7" height="8.4" fill="#a3a8b4"/><rect x="2451.3" y="1136.0" width="11.7" height="11.3" fill="#dde1e4"/><rect x="2451.3" y="1127.7" width="11.7" height="8.3" fill="#c6ccd3"/><rect x="2451.3" y="1118.5" width="11.7" height="9.2" fill="#b6bcc6"/><rect x="2451.3" y="1110.8" width="11.7" height="7.6" fill="#a3a8b4"/><rect x="2465.9" y="1136.0" width="11.7" height="11.3" fill="#dde1e4"/><rect x="2465.9" y="1130.5" width="11.7" height="5.5" fill="#c6ccd3"/><rect x="2465.9" y="1124.2" width="11.7" height="6.3" fill="#b6bcc6"/><rect x="2465.9" y="1119.1" width="11.7" height="5.0" fill="#a3a8b4"/><rect x="2480.5" y="1136.0" width="11.7" height="11.3" fill="#dde1e4"/><rect x="2480.5" y="1129.9" width="11.7" height="6.1" fill="#c6ccd3"/><rect x="2480.5" y="1124.7" width="11.7" height="5.2" fill="#b6bcc6"/><rect x="2480.5" y="1117.4" width="11.7" height="7.3" fill="#a3a8b4"/><rect x="2495.1" y="1136.0" width="11.7" height="11.3" fill="#dde1e4"/><rect x="2495.1" y="1128.9" width="11.7" height="7.2" fill="#c6ccd3"/><rect x="2495.1" y="1121.9" width="11.7" height="6.9" fill="#b6bcc6"/><rect x="2495.1" y="1115.1" width="11.7" height="6.8" fill="#a3a8b4"/><rect x="2509.7" y="1136.0" width="11.7" height="11.3" fill="#dde1e4"/><rect x="2509.7" y="1127.0" width="11.7" height="9.0" fill="#c6ccd3"/><rect x="2509.7" y="1118.5" width="11.7" height="8.6" fill="#b6bcc6"/><rect x="2509.7" y="1107.5" width="11.7" height="11.0" fill="#a3a8b4"/><rect x="2524.3" y="1136.0" width="11.7" height="11.3" fill="#dde1e4"/><rect x="2524.3" y="1129.9" width="11.7" height="6.1" fill="#c6ccd3"/><rect x="2524.3" y="1124.2" width="11.7" height="5.7" fill="#b6bcc6"/><rect x="2524.3" y="1117.4" width="11.7" height="6.7" fill="#a3a8b4"/><rect x="2538.9" y="1136.0" width="11.7" height="11.3" fill="#dde1e4"/><rect x="2538.9" y="1132.7" width="11.7" height="3.3" fill="#c6ccd3"/><rect x="2538.9" y="1129.3" width="11.7" height="3.4" fill="#b6bcc6"/><rect x="2538.9" y="1124.7" width="11.7" height="4.6" fill="#a3a8b4"/><rect x="2553.5" y="1136.0" width="11.7" height="11.3" fill="#dde1e4"/><rect x="2553.5" y="1133.9" width="11.7" height="2.1" fill="#c6ccd3"/><rect x="2553.5" y="1130.4" width="11.7" height="3.5" fill="#b6bcc6"/><rect x="2553.5" y="1127.6" width="11.7" height="2.8" fill="#a3a8b4"/><rect x="2568.2" y="1136.6" width="11.7" height="10.7" fill="#dde1e4"/><rect x="2568.2" y="1135.0" width="11.7" height="1.5" fill="#c6ccd3"/><rect x="2568.2" y="1132.7" width="11.7" height="2.3" fill="#b6bcc6"/><rect x="2568.2" y="1129.9" width="11.7" height="2.8" fill="#a3a8b4"/><rect x="2582.8" y="1136.0" width="11.7" height="11.3" fill="#dde1e4"/><rect x="2582.8" y="1135.0" width="11.7" height="1.0" fill="#c6ccd3"/><rect x="2582.8" y="1133.9" width="11.7" height="1.1" fill="#b6bcc6"/><rect x="2582.8" y="1131.6" width="11.7" height="2.3" fill="#a3a8b4"/><rect x="2597.4" y="1136.0" width="11.7" height="11.3" fill="#dde1e4"/><rect x="2597.4" y="1134.5" width="11.7" height="1.5" fill="#c6ccd3"/><rect x="2597.4" y="1133.9" width="11.7" height="0.6" fill="#b6bcc6"/><rect x="2597.4" y="1132.2" width="11.7" height="1.8" fill="#a3a8b4"/><rect x="2612.0" y="1136.0" width="11.7" height="11.3" fill="#dde1e4"/><rect x="2612.0" y="1134.5" width="11.7" height="1.5" fill="#c6ccd3"/><rect x="2612.0" y="1133.9" width="11.7" height="0.6" fill="#b6bcc6"/><rect x="2612.0" y="1132.2" width="11.7" height="1.8" fill="#a3a8b4"/><rect x="2626.6" y="1136.0" width="11.7" height="11.3" fill="#dde1e4"/><rect x="2626.6" y="1135.0" width="11.7" height="1.0" fill="#c6ccd3"/><rect x="2626.6" y="1134.3" width="11.7" height="0.7" fill="#b6bcc6"/><rect x="2626.6" y="1132.7" width="11.7" height="1.6" fill="#a3a8b4"/><rect x="2641.2" y="1136.0" width="11.7" height="11.3" fill="#dde1e4"/><rect x="2641.2" y="1135.6" width="11.7" height="0.4" fill="#c6ccd3"/><rect x="2641.2" y="1133.9" width="11.7" height="1.7" fill="#b6bcc6"/><rect x="2641.2" y="1132.2" width="11.7" height="1.8" fill="#a3a8b4"/><rect x="2655.8" y="1136.0" width="11.7" height="11.3" fill="#dde1e4"/><rect x="2655.8" y="1135.6" width="11.7" height="0.4" fill="#c6ccd3"/><rect x="2655.8" y="1134.5" width="11.7" height="1.1" fill="#b6bcc6"/><rect x="2655.8" y="1133.3" width="11.7" height="1.2" fill="#a3a8b4"/><rect x="2670.4" y="1136.0" width="11.7" height="11.3" fill="#dde1e4"/><rect x="2670.4" y="1132.2" width="11.7" height="3.9" fill="#c6ccd3"/><rect x="2670.4" y="1129.9" width="11.7" height="2.2" fill="#b6bcc6"/><rect x="2670.4" y="1125.3" width="11.7" height="4.6" fill="#a3a8b4"/><rect x="2670.4" y="1124.7" width="11.7" height="0.6" fill="#c6ccd3"/><rect x="2685.0" y="1136.0" width="11.7" height="11.3" fill="#dde1e4"/><rect x="2685.0" y="1131.1" width="11.7" height="4.9" fill="#c6ccd3"/><rect x="2685.0" y="1124.7" width="11.7" height="6.4" fill="#b6bcc6"/><rect x="2685.0" y="1117.4" width="11.7" height="7.3" fill="#a3a8b4"/><rect x="2699.7" y="1136.0" width="11.7" height="11.3" fill="#dde1e4"/><rect x="2699.7" y="1128.9" width="11.7" height="7.2" fill="#c6ccd3"/><rect x="2699.7" y="1121.4" width="11.7" height="7.5" fill="#b6bcc6"/><rect x="2699.7" y="1111.5" width="11.7" height="9.9" fill="#a3a8b4"/><rect x="2714.3" y="1136.0" width="11.7" height="11.3" fill="#dde1e4"/><rect x="2714.3" y="1129.9" width="11.7" height="6.1" fill="#c6ccd3"/><rect x="2714.3" y="1123.6" width="11.7" height="6.3" fill="#b6bcc6"/><rect x="2714.3" y="1116.9" width="11.7" height="6.7" fill="#a3a8b4"/><rect x="2714.3" y="1116.2" width="11.7" height="0.6" fill="#9a9fab"/><rect x="2728.9" y="1136.0" width="11.7" height="11.3" fill="#dde1e4"/><rect x="2728.9" y="1131.7" width="11.7" height="4.3" fill="#c6ccd3"/><rect x="2728.9" y="1127.6" width="11.7" height="4.1" fill="#b6bcc6"/><rect x="2728.9" y="1121.4" width="11.7" height="6.2" fill="#a3a8b4"/><rect x="2743.5" y="1136.0" width="11.7" height="11.3" fill="#dde1e4"/><rect x="2743.5" y="1128.9" width="11.7" height="7.2" fill="#c6ccd3"/><rect x="2743.5" y="1121.4" width="11.7" height="7.5" fill="#b6bcc6"/><rect x="2743.5" y="1113.8" width="11.7" height="7.6" fill="#a3a8b4"/><rect x="2743.5" y="1112.8" width="11.7" height="1.0" fill="#9a9fab"/><rect x="2758.1" y="1136.6" width="11.7" height="10.7" fill="#dde1e4"/><rect x="2758.1" y="1125.5" width="11.7" height="11.1" fill="#c6ccd3"/><rect x="2758.1" y="1116.2" width="11.7" height="9.3" fill="#b6bcc6"/><rect x="2758.1" y="1106.4" width="11.7" height="9.9" fill="#a3a8b4"/><rect x="2758.1" y="1105.8" width="11.7" height="0.6" fill="#9a9fab"/><rect x="2772.7" y="1136.0" width="11.7" height="11.3" fill="#dde1e4"/><rect x="2772.7" y="1126.1" width="11.7" height="10.0" fill="#c6ccd3"/><rect x="2772.7" y="1112.0" width="11.7" height="14.0" fill="#b6bcc6"/><rect x="2772.7" y="1099.6" width="11.7" height="12.4" fill="#a3a8b4"/><rect x="2772.7" y="1098.6" width="11.7" height="1.1" fill="#9a9fab"/><rect x="2787.3" y="1136.0" width="11.7" height="11.3" fill="#dde1e4"/><rect x="2787.3" y="1122.6" width="11.7" height="13.4" fill="#c6ccd3"/><rect x="2787.3" y="1109.2" width="11.7" height="13.5" fill="#b6bcc6"/><rect x="2787.3" y="1094.6" width="11.7" height="14.6" fill="#a3a8b4"/><rect x="2787.3" y="1094.3" width="11.7" height="0.3" fill="#9a9fab"/><rect x="2801.9" y="1136.0" width="11.7" height="11.3" fill="#dde1e4"/><rect x="2801.9" y="1125.5" width="11.7" height="10.5" fill="#c6ccd3"/><rect x="2801.9" y="1114.3" width="11.7" height="11.1" fill="#b6bcc6"/><rect x="2801.9" y="1103.0" width="11.7" height="11.4" fill="#a3a8b4"/><rect x="2801.9" y="1102.5" width="11.7" height="0.5" fill="#9a9fab"/><rect x="2816.5" y="1136.6" width="11.7" height="10.7" fill="#dde1e4"/><rect x="2816.5" y="1127.0" width="11.7" height="9.5" fill="#c6ccd3"/><rect x="2816.5" y="1116.2" width="11.7" height="10.8" fill="#b6bcc6"/><rect x="2816.5" y="1105.2" width="11.7" height="11.0" fill="#a3a8b4"/><rect x="2816.5" y="1104.3" width="11.7" height="1.0" fill="#9a9fab"/><rect x="2831.1" y="1136.0" width="11.7" height="11.3" fill="#dde1e4"/><rect x="2831.1" y="1127.0" width="11.7" height="9.0" fill="#c6ccd3"/><rect x="2831.1" y="1116.7" width="11.7" height="10.3" fill="#b6bcc6"/><rect x="2831.1" y="1105.9" width="11.7" height="10.9" fill="#a3a8b4"/><rect x="2831.1" y="1104.7" width="11.7" height="1.1" fill="#9a9fab"/><rect x="2845.8" y="1136.0" width="11.7" height="11.3" fill="#dde1e4"/><rect x="2845.8" y="1128.3" width="11.7" height="7.7" fill="#c6ccd3"/><rect x="2845.8" y="1120.2" width="11.7" height="8.1" fill="#b6bcc6"/><rect x="2845.8" y="1112.6" width="11.7" height="7.6" fill="#a3a8b4"/><rect x="2845.8" y="1110.6" width="11.7" height="2.0" fill="#9a9fab"/><rect x="2860.4" y="1136.0" width="11.7" height="11.3" fill="#dde1e4"/><rect x="2860.4" y="1127.7" width="11.7" height="8.3" fill="#c6ccd3"/><rect x="2860.4" y="1120.8" width="11.7" height="6.9" fill="#b6bcc6"/><rect x="2860.4" y="1112.6" width="11.7" height="8.2" fill="#a3a8b4"/><rect x="2860.4" y="1108.9" width="11.7" height="3.7" fill="#9a9fab"/><rect x="2875.0" y="1141.1" width="11.7" height="6.2" fill="#dde1e4"/><rect x="2875.0" y="1135.6" width="11.7" height="5.5" fill="#c6ccd3"/><rect x="2875.0" y="1131.5" width="11.7" height="4.1" fill="#b6bcc6"/><rect x="2875.0" y="1127.0" width="11.7" height="4.5" fill="#a3a8b4"/><rect x="2875.0" y="1125.5" width="11.7" height="1.5" fill="#9a9fab"/></g><path d="M1992.0 1096 A17.5 17.5 0 0 0 1992.0 1131Z" fill="#333742"/><path d="M2881.8 1096 A17.5 17.5 0 0 1 2881.8 1131Z" fill="#333742"/><rect x="1993.5" y="1081.5" width="886.8000000000002" height="65" fill="none" stroke="#2c3039" stroke-width="3.6" stroke-dasharray="3.6 3.6"/></svg>
<div class="a t" style="top:1349.3px;font-size:24.2px;line-height:24.2px;color:#1c2b34;font-weight:700;letter-spacing:0.099px;left:221.0px;">cluster_name in sum:cilium.cilium_drop_count_total{env:build-stable}.as_count()</div>
<div class="a t" style="top:1349.3px;font-size:24.2px;line-height:24.2px;color:#1c2b34;font-weight:700;letter-spacing:0.465px;left:1878.0px;">FINDINGS</div>
<div class="a t" style="top:1349.3px;font-size:24.2px;line-height:24.2px;color:#1c2b34;font-weight:700;letter-spacing:0.150px;right:672.0px;">AVG</div>
<div class="a t" style="top:1349.3px;font-size:24.2px;line-height:24.2px;color:#1c2b34;font-weight:700;letter-spacing:0.150px;right:542.4px;">MIN</div>
<div class="a t" style="top:1349.3px;font-size:24.2px;line-height:24.2px;color:#1c2b34;font-weight:700;letter-spacing:0.150px;right:412.0px;">MAX</div>
<div class="a t" style="top:1349.3px;font-size:24.2px;line-height:24.2px;color:#1c2b34;font-weight:700;letter-spacing:0.150px;right:272.9px;">SUM</div>
<div class="a t" style="top:1349.3px;font-size:24.2px;line-height:24.2px;color:#1c2b34;font-weight:700;letter-spacing:0.150px;right:143.3px;">VALUE</div>
<div class="a" style="left:154.0px;top:1392.4px;width:25.0px;height:25.0px;background:#8fcbfc;border-radius:4.5px;"></div>
<div class="a" style="left:221.5px;top:1386.0px;width:89.5px;height:37.0px;background:#f6f7f8;border-radius:6px;"></div>
<div class="a" style="left:228.2px;top:1390.1px;width:12.2px;height:9.3px;background:#e3e7ea;"></div>
<div class="a" style="left:240.1px;top:1390.1px;width:12.2px;height:9.3px;background:#f1f2f6;"></div>
<div class="a" style="left:252.1px;top:1390.1px;width:12.2px;height:9.3px;background:#eceef1;"></div>
<div class="a" style="left:264.0px;top:1390.1px;width:12.2px;height:9.3px;background:#e4e7ea;"></div>
<div class="a" style="left:275.9px;top:1390.1px;width:12.2px;height:9.3px;background:#e4e7ea;"></div>
<div class="a" style="left:287.8px;top:1390.1px;width:12.2px;height:9.3px;background:#e6e9eb;"></div>
<div class="a" style="left:228.2px;top:1399.1px;width:12.2px;height:12.0px;background:#96a7c3;"></div>
<div class="a" style="left:240.1px;top:1399.1px;width:12.2px;height:12.0px;background:#a5b2ca;"></div>
<div class="a" style="left:252.1px;top:1399.1px;width:12.2px;height:12.0px;background:#a5b2ca;"></div>
<div class="a" style="left:264.0px;top:1399.1px;width:12.2px;height:12.0px;background:#93a5c2;"></div>
<div class="a" style="left:275.9px;top:1399.1px;width:12.2px;height:12.0px;background:#9aaac5;"></div>
<div class="a" style="left:287.8px;top:1399.1px;width:12.2px;height:12.0px;background:#b4bccd;"></div>
<div class="a" style="left:228.2px;top:1410.8px;width:12.2px;height:12.2px;background:#e3e6ee;"></div>
<div class="a" style="left:240.1px;top:1410.8px;width:12.2px;height:12.2px;background:#e0e4ea;"></div>
<div class="a" style="left:252.1px;top:1410.8px;width:12.2px;height:12.2px;background:#e0e4ea;"></div>
<div class="a" style="left:264.0px;top:1410.8px;width:12.2px;height:12.2px;background:#e6e8ee;"></div>
<div class="a" style="left:275.9px;top:1410.8px;width:12.2px;height:12.2px;background:#e6e8ee;"></div>
<div class="a" style="left:287.8px;top:1410.8px;width:12.2px;height:12.2px;background:#f1f2f5;"></div>
<div class="a t" style="top:1392.7px;font-size:24.2px;line-height:24.2px;color:#1c2b34;letter-spacing:0.400px;right:671.8px;">168,099</div>
<div class="a t" style="top:1392.7px;font-size:24.2px;line-height:24.2px;color:#1c2b34;letter-spacing:0.400px;right:542.1px;">93.01k</div>
<div class="a t" style="top:1392.7px;font-size:24.2px;line-height:24.2px;color:#1c2b34;letter-spacing:0.400px;right:411.8px;">170.2k</div>
<div class="a t" style="top:1392.7px;font-size:24.2px;line-height:24.2px;color:#1c2b34;letter-spacing:0.400px;right:272.7px;">10,422.1k</div>
<div class="a t" style="top:1392.7px;font-size:24.2px;line-height:24.2px;color:#1c2b34;letter-spacing:0.400px;right:143.0px;">168,888</div>
<div class="a" style="left:154.0px;top:1441.0px;width:25.0px;height:25.0px;background:#2f96e8;border-radius:4.5px;"></div>
<div class="a" style="left:222.0px;top:1434.0px;width:121.0px;height:39.0px;background:#f6f7f8;border-radius:6px;"></div>
<div class="a" style="left:231.6px;top:1441.0px;width:11.3px;height:11.2px;background:#b0bbd0;"></div>
<div class="a" style="left:242.6px;top:1441.0px;width:11.3px;height:11.2px;background:#b9c3d5;"></div>
<div class="a" style="left:253.6px;top:1441.0px;width:11.3px;height:11.2px;background:#dfe4ec;"></div>
<div class="a" style="left:264.6px;top:1441.0px;width:11.3px;height:11.2px;background:#c9d0de;"></div>
<div class="a" style="left:275.6px;top:1441.0px;width:11.3px;height:11.2px;background:#93a4c2;"></div>
<div class="a" style="left:286.6px;top:1441.0px;width:11.3px;height:11.2px;background:#b5bfd2;"></div>
<div class="a" style="left:297.6px;top:1441.0px;width:11.3px;height:11.2px;background:#b9c3d5;"></div>
<div class="a" style="left:308.6px;top:1441.0px;width:11.3px;height:11.2px;background:#d4d9e3;"></div>
<div class="a" style="left:319.6px;top:1441.0px;width:11.3px;height:11.2px;background:#dcdfe7;"></div>
<div class="a" style="left:330.6px;top:1441.0px;width:11.3px;height:11.2px;background:#e9ebef;"></div>
<div class="a" style="left:231.6px;top:1451.9px;width:11.3px;height:11.0px;background:#9fadc7;"></div>
<div class="a" style="left:242.6px;top:1451.9px;width:11.3px;height:11.0px;background:#a3b0c9;"></div>
<div class="a" style="left:253.6px;top:1451.9px;width:11.3px;height:11.0px;background:#93a5c3;"></div>
<div class="a" style="left:264.6px;top:1451.9px;width:11.3px;height:11.0px;background:#93a5c3;"></div>
<div class="a" style="left:275.6px;top:1451.9px;width:11.3px;height:11.0px;background:#8a9dbe;"></div>
<div class="a" style="left:286.6px;top:1451.9px;width:11.3px;height:11.0px;background:#9aa9c4;"></div>
<div class="a" style="left:297.6px;top:1451.9px;width:11.3px;height:11.0px;background:#7f93b5;"></div>
<div class="a" style="left:308.6px;top:1451.9px;width:11.3px;height:11.0px;background:#9fadc7;"></div>
<div class="a" style="left:319.6px;top:1451.9px;width:11.3px;height:11.0px;background:#a6b3cb;"></div>
<div class="a" style="left:330.6px;top:1451.9px;width:11.3px;height:11.0px;background:#dfe2e9;"></div>
<div class="a" style="left:231.6px;top:1462.6px;width:11.3px;height:9.7px;background:#f3f4f6;"></div>
<div class="a" style="left:242.6px;top:1462.6px;width:11.3px;height:9.7px;background:#f3f4f6;"></div>
<div class="a" style="left:253.6px;top:1462.6px;width:11.3px;height:9.7px;background:#f1f2f5;"></div>
<div class="a" style="left:264.6px;top:1462.6px;width:11.3px;height:9.7px;background:#f1f2f5;"></div>
<div class="a" style="left:275.6px;top:1462.6px;width:11.3px;height:9.7px;background:#f1f2f5;"></div>
<div class="a" style="left:286.6px;top:1462.6px;width:11.3px;height:9.7px;background:#f3f4f6;"></div>
<div class="a" style="left:297.6px;top:1462.6px;width:11.3px;height:9.7px;background:#c9cfdc;"></div>
<div class="a" style="left:308.6px;top:1462.6px;width:11.3px;height:9.7px;background:#f1f2f5;"></div>
<div class="a" style="left:319.6px;top:1462.6px;width:11.3px;height:9.7px;background:#f3f4f6;"></div>
<div class="a" style="left:330.6px;top:1462.6px;width:11.3px;height:9.7px;background:#f5f6f7;"></div>
<div class="a t" style="top:1441.8px;font-size:24.2px;line-height:24.2px;color:#1c2b34;letter-spacing:0.400px;right:671.8px;">81,964</div>
<div class="a t" style="top:1441.8px;font-size:24.2px;line-height:24.2px;color:#1c2b34;letter-spacing:0.400px;right:542.1px;">10.01k</div>
<div class="a t" style="top:1441.8px;font-size:24.2px;line-height:24.2px;color:#1c2b34;letter-spacing:0.400px;right:411.8px;">214.4k</div>
<div class="a t" style="top:1441.8px;font-size:24.2px;line-height:24.2px;color:#1c2b34;letter-spacing:0.400px;right:272.7px;">5,081.7k</div>
<div class="a t" style="top:1441.8px;font-size:24.2px;line-height:24.2px;color:#1c2b34;letter-spacing:0.400px;right:143.0px;">64,301</div>
<div class="a" style="left:154.0px;top:1489.0px;width:25.0px;height:25.0px;background:#d8c2fa;border-radius:4.5px;"></div>
<div class="a" style="left:222.0px;top:1482.0px;width:123.0px;height:40.0px;background:#f6f7f8;border-radius:6px;"></div>
<div class="a" style="left:231.4px;top:1485.4px;width:11.3px;height:10.4px;background:#e6e9ed;"></div>
<div class="a" style="left:242.4px;top:1485.4px;width:11.3px;height:10.4px;background:#e9ebef;"></div>
<div class="a" style="left:253.4px;top:1485.4px;width:11.3px;height:10.4px;background:#eef0f3;"></div>
<div class="a" style="left:264.4px;top:1485.4px;width:11.3px;height:10.4px;background:#e6e9ed;"></div>
<div class="a" style="left:275.4px;top:1485.4px;width:11.3px;height:10.4px;background:#c5cfdf;"></div>
<div class="a" style="left:286.4px;top:1485.4px;width:11.3px;height:10.4px;background:#e6e9ed;"></div>
<div class="a" style="left:297.4px;top:1485.4px;width:11.3px;height:10.4px;background:#e9ebee;"></div>
<div class="a" style="left:308.4px;top:1485.4px;width:11.3px;height:10.4px;background:#eceef1;"></div>
<div class="a" style="left:319.4px;top:1485.4px;width:11.3px;height:10.4px;background:#eceef1;"></div>
<div class="a" style="left:330.4px;top:1485.4px;width:11.3px;height:10.4px;background:#eef0f2;"></div>
<div class="a" style="left:231.4px;top:1495.5px;width:11.3px;height:11.2px;background:#8fa3c4;"></div>
<div class="a" style="left:242.4px;top:1495.5px;width:11.3px;height:11.2px;background:#95a7c6;"></div>
<div class="a" style="left:253.4px;top:1495.5px;width:11.3px;height:11.2px;background:#a5b3cc;"></div>
<div class="a" style="left:264.4px;top:1495.5px;width:11.3px;height:11.2px;background:#93a5c4;"></div>
<div class="a" style="left:275.4px;top:1495.5px;width:11.3px;height:11.2px;background:#7f96bd;"></div>
<div class="a" style="left:286.4px;top:1495.5px;width:11.3px;height:11.2px;background:#8fa3c4;"></div>
<div class="a" style="left:297.4px;top:1495.5px;width:11.3px;height:11.2px;background:#8a9fc0;"></div>
<div class="a" style="left:308.4px;top:1495.5px;width:11.3px;height:11.2px;background:#a3b1ca;"></div>
<div class="a" style="left:319.4px;top:1495.5px;width:11.3px;height:11.2px;background:#a9b6cd;"></div>
<div class="a" style="left:330.4px;top:1495.5px;width:11.3px;height:11.2px;background:#a9b6cd;"></div>
<div class="a" style="left:231.4px;top:1506.4px;width:11.3px;height:7.3px;background:#cdd4e0;"></div>
<div class="a" style="left:242.4px;top:1506.4px;width:11.3px;height:7.3px;background:#cdd4e0;"></div>
<div class="a" style="left:253.4px;top:1506.4px;width:11.3px;height:7.3px;background:#b9c3d5;"></div>
<div class="a" style="left:264.4px;top:1506.4px;width:11.3px;height:7.3px;background:#c3cbda;"></div>
<div class="a" style="left:275.4px;top:1506.4px;width:11.3px;height:7.3px;background:#c3cbda;"></div>
<div class="a" style="left:286.4px;top:1506.4px;width:11.3px;height:7.3px;background:#c3cbda;"></div>
<div class="a" style="left:297.4px;top:1506.4px;width:11.3px;height:7.3px;background:#9fb0ca;"></div>
<div class="a" style="left:308.4px;top:1506.4px;width:11.3px;height:7.3px;background:#c9d0dd;"></div>
<div class="a" style="left:319.4px;top:1506.4px;width:11.3px;height:7.3px;background:#c9d0dd;"></div>
<div class="a" style="left:330.4px;top:1506.4px;width:11.3px;height:7.3px;background:#cdd4e0;"></div>
<div class="a t" style="top:1490.1px;font-size:24.2px;line-height:24.2px;color:#1c2b34;letter-spacing:0.400px;right:671.8px;">78,624</div>
<div class="a t" style="top:1490.1px;font-size:24.2px;line-height:24.2px;color:#1c2b34;letter-spacing:0.400px;right:542.1px;">11.22k</div>
<div class="a t" style="top:1490.1px;font-size:24.2px;line-height:24.2px;color:#1c2b34;letter-spacing:0.400px;right:411.8px;">205.5k</div>
<div class="a t" style="top:1490.1px;font-size:24.2px;line-height:24.2px;color:#1c2b34;letter-spacing:0.400px;right:272.7px;">4,874.7k</div>
<div class="a t" style="top:1490.1px;font-size:24.2px;line-height:24.2px;color:#1c2b34;letter-spacing:0.400px;right:143.0px;">77,113</div>
<div class="a" style="left:125.0px;top:1505.0px;width:2762.0px;height:17.0px;background:linear-gradient(to bottom, rgba(235,236,238,0) 0%, rgba(228,230,232,.35) 55%, rgba(226,228,230,.8) 100%);"></div>
<div class="a" style="left:100.0px;top:1522.0px;width:2800.0px;height:40.0px;background:#fff;"></div>
</body></html>
